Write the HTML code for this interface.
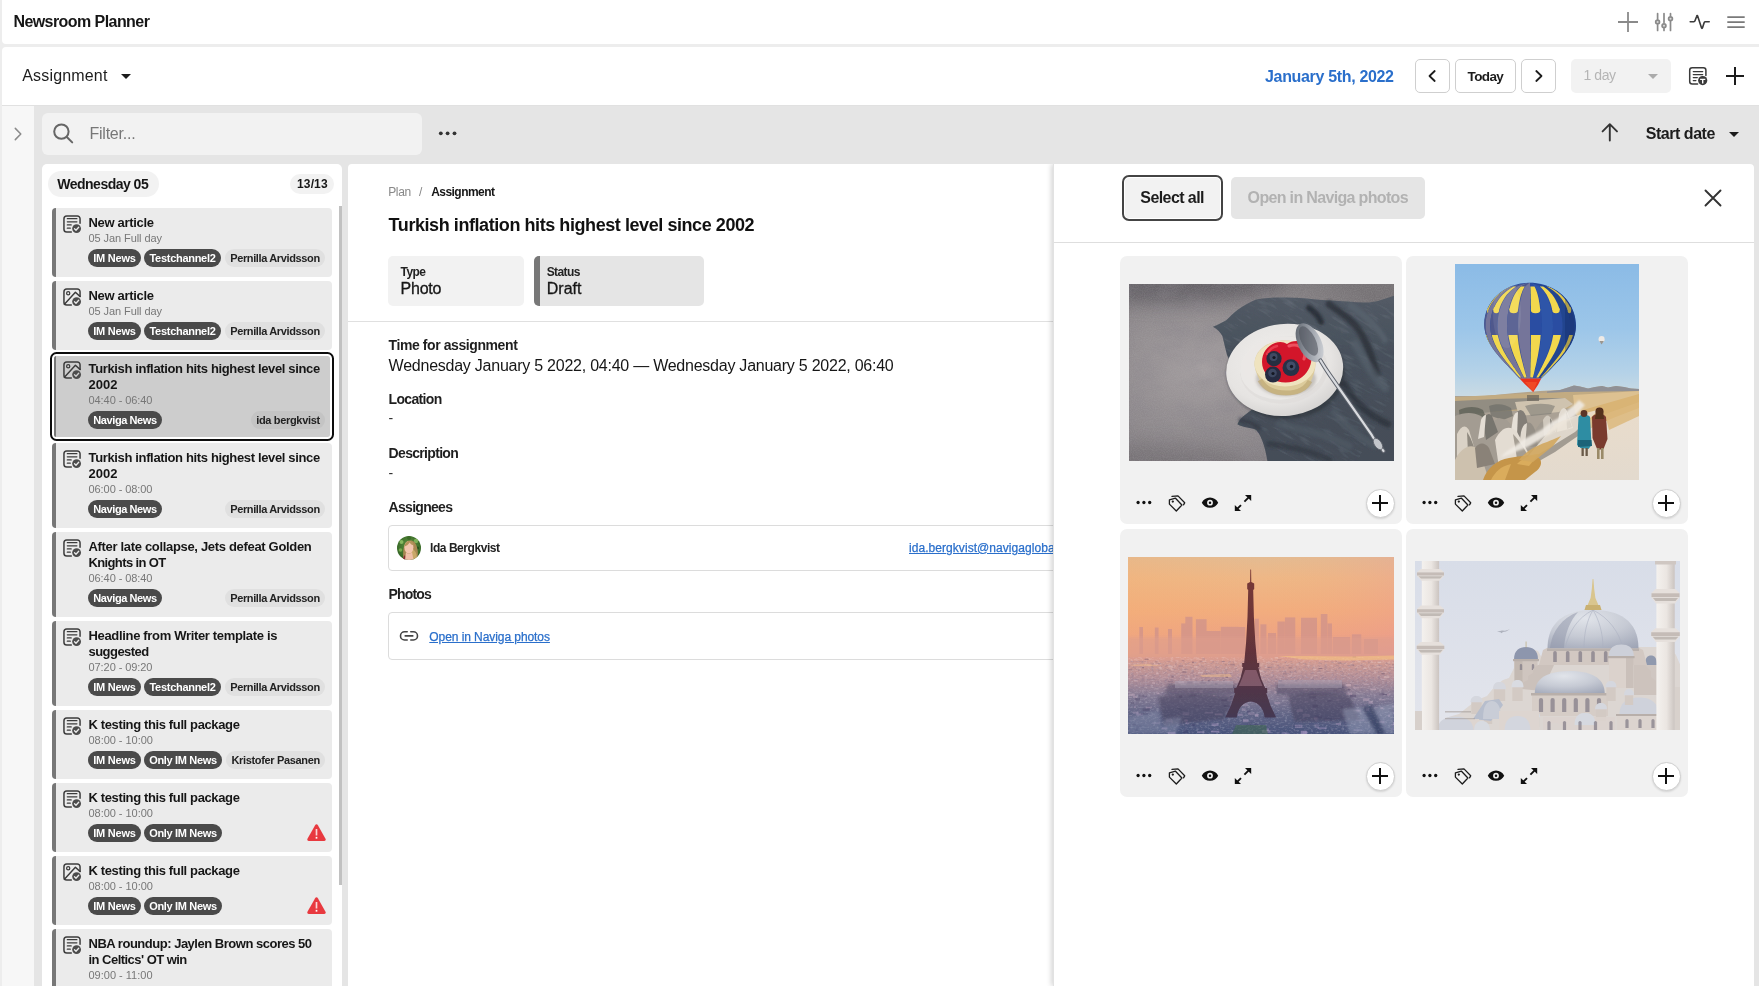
<!DOCTYPE html><html lang="en"><head><meta charset="utf-8"><title>Newsroom Planner</title><style>
*{box-sizing:border-box;margin:0;padding:0}
html,body{width:1759px;height:986px;overflow:hidden}
#wrap{position:absolute;left:0;top:0;width:1759px;height:986px;will-change:transform}
body{background:#e5e5e5;font-family:"Liberation Sans",sans-serif;color:#1a1a1a;position:relative}
.abs{position:absolute}
.t{position:absolute;white-space:nowrap;line-height:1}
.b{font-weight:bold}
svg{position:absolute;overflow:visible}
#top{position:absolute;left:2px;top:0;width:1757px;height:44px;background:#fff;border-bottom-left-radius:4px}
#gap{position:absolute;left:0;top:0;width:1759px;height:105px;background:#ededed}
#bar2{position:absolute;left:2px;top:47px;width:1757px;height:58px;background:#fff;border-top-left-radius:4px}
#side{position:absolute;left:2px;top:105px;width:32px;height:881px;background:#f7f7f7}
#lstrip{position:absolute;left:0;top:105px;width:2px;height:881px;background:#ededed}
.btn{position:absolute;top:59px;height:34px;border:1px solid #cfcfcf;border-radius:5px;background:#fff}
#filter{position:absolute;left:42px;top:113px;width:380px;height:42px;border-radius:6px;background:#f2f2f2}
#col{position:absolute;left:42px;top:164px;width:300px;height:822px;background:#fff;border-radius:5px 5px 0 0;overflow:hidden}
#scroll{position:absolute;left:339px;top:206px;width:3px;height:679px;background:#c1c1c1}
#scrolltrack{display:none}
.pill{position:absolute;height:18px;border-radius:9px;background:#4a4a4a}
.pill.l{background:#e0e0e0}
.card{position:absolute;left:52px;width:280px;background:#ebebeb;border-radius:4px;overflow:hidden}
.card .bar{position:absolute;left:0;top:0;bottom:0;width:4px;background:#777}
.ct{font-size:13px;font-weight:bold;color:#161616}
.cs{font-size:11px;color:#777}
.pt{font-size:11px;font-weight:bold;color:#fff}
.pt.d{color:#222}
#detail{position:absolute;left:348px;top:164px;width:720px;height:822px;background:#fff;border-radius:4px 0 0 0;overflow:hidden}
.lab{font-size:14px;font-weight:bold;color:#1f1f1f}
.box{position:absolute;border:1px solid #dcdcdc;border-radius:4px;background:#fff}
a{color:#2a6fcb;text-decoration:underline}
#right{position:absolute;left:1054px;top:164px;width:700px;height:822px;background:#fff;border-radius:0 4px 0 0;box-shadow:-1px 0 0 #e2e2e2,-3px 0 5px rgba(0,0,0,.16);clip-path:inset(0 0 0 -12px)}
.pc{position:absolute;width:282px;height:268px;background:#f1f1f1;border-radius:7px}
.plus{position:absolute;width:29px;height:29px;border-radius:50%;background:#fff;border:1px solid #cfcfcf;box-shadow:0 1px 2px rgba(0,0,0,.12)}
</style></head><body><div id="wrap">
<div id="gap"></div><div id="top"></div><div id="bar2"></div><div id="lstrip"></div><div id="side"></div><div class="abs" style="left:2px;top:105px;width:1757px;height:1px;background:#e1e1e1"></div>
<span id="t_title" class="t b" style="left:13.4px;top:13.65px;font-size:16px;letter-spacing:-0.562px;color:#161616">Newsroom Planner</span>
<svg style="left:1616px;top:10px" width="24" height="24" viewBox="0 0 24 24" fill="none" stroke="#8a8a8a" stroke-width="1.8"><path d="M12 2v20M2 12h20"/></svg>
<svg style="left:1652px;top:10px" width="24" height="24" viewBox="0 0 24 24" fill="none" stroke="#8a8a8a" stroke-width="1.7" stroke-linecap="round"><path d="M5.6 3.6v5.6M5.6 14.8v5.6M12 3.6v9M12 18.6v1.8M18.5 3.6v2.4M18.5 11.4v9"/><circle cx="5.6" cy="12" r="1.9" fill="#d9d9d9"/><circle cx="12" cy="15.8" r="1.9" fill="#d9d9d9"/><circle cx="18.5" cy="8.7" r="1.9" fill="#d9d9d9"/></svg>
<svg style="left:1688px;top:10px" width="24" height="24" viewBox="0 0 24 24" fill="none" stroke="#3a3a3a" stroke-width="1.6" stroke-linecap="round" stroke-linejoin="round"><path d="M2.2 11.7h3.6c.6 0 1-.3 1.2-.9L8.600 6.400c.3-1 .9-1 1.200 0l3.600 11.200c.3 1 .9 1 1.200 0l1.600-5c.2-.6.6-.9 1.200-.9h3.800"/></svg>
<svg style="left:1724px;top:10px" width="24" height="24" viewBox="0 0 24 24" fill="none" stroke="#7a7a7a" stroke-width="1.7"><path d="M3.300 7.200h17.400M3.300 12.100h17.400M3.300 17.100h17.400"/></svg>
<span id="t_assign" class="t " style="left:22.2px;top:67.65px;font-size:16px;letter-spacing:0.178px;color:#1c1c1c">Assignment</span>
<svg style="left:121px;top:74px" width="10" height="5" viewBox="0 0 10 5"><path d="M0 0h10L5 5z" fill="#1c1c1c"/></svg>
<span id="t_date" class="t b" style="left:1265px;top:68.65px;font-size:16px;letter-spacing:-0.331px;color:#2a6fcb">January 5th, 2022</span>
<div class="btn" style="left:1415px;width:35px"></div><div class="btn" style="left:1455px;width:61px"></div><div class="btn" style="left:1521px;width:35px"></div>
<svg style="left:1424px;top:68px" width="16" height="16" viewBox="0 0 16 16" fill="none" stroke="#1c1c1c" stroke-width="1.8" stroke-linecap="round" stroke-linejoin="round"><path d="M10.700 3L5.500 8l5.200 5"/></svg>
<svg style="left:1531px;top:68px" width="16" height="16" viewBox="0 0 16 16" fill="none" stroke="#1c1c1c" stroke-width="1.8" stroke-linecap="round" stroke-linejoin="round"><path d="M5.300 3L10.500 8l-5.200 5"/></svg>
<span id="t_today" class="t b" style="left:1467.6px;top:69.90px;font-size:13.5px;letter-spacing:-0.616px;color:#1c1c1c">Today</span>
<div class="abs" style="left:1571px;top:59px;width:100px;height:34px;border-radius:5px;background:#f2f2f2"></div>
<span id="t_1day" class="t " style="left:1583.5px;top:68.15px;font-size:14px;letter-spacing:-0.438px;color:#b5b5b5">1 day</span>
<svg style="left:1648px;top:74px" width="10" height="5" viewBox="0 0 10 5"><path d="M0 0h10L5 5z" fill="#ababab"/></svg>
<svg style="left:1688px;top:66px" width="20" height="20" viewBox="0 0 20 20" fill="none" stroke="#3a3a3a" stroke-width="1.5" stroke-linecap="round"><path d="M9.600 17.900H4.200c-1.500 0-2.500-1-2.500-2.500V4.200c0-1.500 1-2.500 2.500-2.500h11.200c1.500 0 2.500 1 2.500 2.500v5.200"/><path d="M5.300 5.600h9.400M5.300 8.600h9.400M5.300 11.600h4M5.300 14.600h2.600" stroke-width="1.300"/><circle cx="14.700" cy="14.600" r="4.600" fill="#3a3a3a" stroke="none"/><path d="M12.100 12.700h5.200v1.400h-1.900v3.300H14v-3.300h-1.900z" fill="#fff" stroke="none"/></svg>
<svg style="left:1726px;top:67px" width="18" height="18" viewBox="0 0 18 18" fill="none" stroke="#1c1c1c" stroke-width="2"><path d="M9 0v18M0 9h18"/></svg>
<svg style="left:10px;top:126px" width="16" height="16" viewBox="0 0 16 16" fill="none" stroke="#8a8a8a" stroke-width="1.500" stroke-linecap="round" stroke-linejoin="round"><path d="M5.300 2.400L10.800 8l-5.500 5.600"/></svg>
<div id="filter"></div>
<svg style="left:51px;top:121px" width="24" height="24" viewBox="0 0 24 24" fill="none" stroke="#666" stroke-width="2" stroke-linecap="round"><circle cx="10.400" cy="10.600" r="7.200"/><path d="M15.800 16l5.400 5.400"/></svg>
<span id="t_filter" class="t " style="left:89.4px;top:125.65px;font-size:16px;letter-spacing:-0.214px;color:#777">Filter...</span>
<svg style="left:436px;top:129px" width="24" height="8" viewBox="0 0 24 8"><circle cx="4.800" cy="4.300" r="1.900" fill="#333"/><circle cx="11.600" cy="4.300" r="1.900" fill="#333"/><circle cx="18.500" cy="4.300" r="1.900" fill="#333"/></svg>
<svg style="left:1600px;top:122px" width="20" height="20" viewBox="0 0 20 20" fill="none" stroke="#333" stroke-width="1.900" stroke-linecap="round" stroke-linejoin="round"><path d="M9.800 18.600V2.200M2.600 9.400L9.800 2.200l7.200 7.200"/></svg>
<span id="t_start" class="t b" style="left:1645.7px;top:125.65px;font-size:16px;letter-spacing:-0.455px;color:#1c1c1c">Start date</span>
<svg style="left:1729px;top:132px" width="10" height="5" viewBox="0 0 10 5"><path d="M0 0h10L5 5z" fill="#1c1c1c"/></svg>
<div id="col"></div><div id="scrolltrack"></div><div id="scroll"></div>
<div class="abs" style="left:48px;top:171px;width:111px;height:26px;border-radius:13px;background:#f2f2f2"></div>
<span id="t_wed" class="t b" style="left:57.3px;top:177.15px;font-size:14px;letter-spacing:-0.511px;color:#161616">Wednesday 05</span>
<div class="abs" style="left:290px;top:174px;width:44px;height:20px;border-radius:10px;background:#f2f2f2"></div>
<span id="t_1313" class="t b" style="left:297px;top:178.15px;font-size:12px;letter-spacing:0.142px;color:#161616">13/13</span>
<div class="card" style="top:208px;height:69px">
<div class="bar"></div>
<svg style="left:10px;top:6px" width="20" height="20" viewBox="0 0 20 20" fill="none" stroke="#3c3c3c" stroke-width="1.500" stroke-linecap="round"><path d="M9.300 18.050H4.700a2.750 2.750 0 0 1-2.750-2.750V4.700A2.750 2.750 0 0 1 4.700 1.950h10.600a2.750 2.750 0 0 1 2.750 2.750v4.600"/><path d="M5.300 4.700h9.600M5.300 7.800h9.600M5.300 10.900h3.900M5.300 14.200h3" stroke-width="1.250"/><circle cx="14.600" cy="14.600" r="4.400" fill="#4c4c4c" stroke="none"/><path d="M12.500 14.700l1.500 1.500 2.700-3" stroke="#ebebeb" stroke-width="1.300" stroke-linejoin="round"/></svg>
<span id="c0_l0" class="t ct" style="left:36.5px;top:8.15px;letter-spacing:-0.316px;">New article</span>
<span id="c0_s" class="t cs" style="left:36.5px;top:24.65px;letter-spacing:-0.079px;">05 Jan Full day</span>
<div class="pill" style="left:36px;top:41px;width:52.8px"></div><span class="t pt" style="left:36px;width:52.8px;top:44.65px;text-align:center;letter-spacing:-0.236px;">IM News</span>
<div class="pill" style="left:92px;top:41px;width:77px"></div><span class="t pt" style="left:92px;width:77px;top:44.65px;text-align:center;letter-spacing:-0.291px;">Testchannel2</span>
<div class="pill l" style="left:173px;top:41px;width:100px"></div><span class="t pt d" style="left:173px;width:100px;top:44.65px;text-align:center;letter-spacing:-0.364px;">Pernilla Arvidsson</span>
</div>
<div class="card" style="top:281px;height:69px">
<div class="bar"></div>
<svg style="left:10px;top:6px" width="20" height="20" viewBox="0 0 20 20" fill="none" stroke="#3c3c3c" stroke-width="1.500" stroke-linecap="round" stroke-linejoin="round"><path d="M9.300 18.050H4.700a2.750 2.750 0 0 1-2.750-2.750V4.700A2.750 2.750 0 0 1 4.700 1.950h10.600a2.750 2.750 0 0 1 2.750 2.750v4.600"/><circle cx="6.200" cy="6.300" r="1.600" stroke-width="1.250"/><path d="M2.400 17.200L13.400 5.300l4.800 4.300" stroke-width="1.450"/><circle cx="14.600" cy="14.600" r="4.400" fill="#4c4c4c" stroke="none"/><path d="M12.500 14.700l1.500 1.500 2.700-3" stroke="#ebebeb" stroke-width="1.300"/></svg>
<span id="c1_l0" class="t ct" style="left:36.5px;top:8.15px;letter-spacing:-0.316px;">New article</span>
<span id="c1_s" class="t cs" style="left:36.5px;top:24.65px;letter-spacing:-0.079px;">05 Jan Full day</span>
<div class="pill" style="left:36px;top:41px;width:52.8px"></div><span class="t pt" style="left:36px;width:52.8px;top:44.65px;text-align:center;letter-spacing:-0.236px;">IM News</span>
<div class="pill" style="left:92px;top:41px;width:77px"></div><span class="t pt" style="left:92px;width:77px;top:44.65px;text-align:center;letter-spacing:-0.291px;">Testchannel2</span>
<div class="pill l" style="left:173px;top:41px;width:100px"></div><span class="t pt d" style="left:173px;width:100px;top:44.65px;text-align:center;letter-spacing:-0.364px;">Pernilla Arvidsson</span>
</div>
<div class="abs" style="left:50px;top:352px;width:284px;height:89px;border:2px solid #0d0d0d;border-radius:6.500px;background:#fff"></div>
<div class="card" style="top:356px;height:81px;left:54px;width:276px;background:#cdcdcd;border-radius:2.500px">
<div class="bar" style="width:2px"></div>
<svg style="left:8px;top:4px" width="20" height="20" viewBox="0 0 20 20" fill="none" stroke="#3c3c3c" stroke-width="1.500" stroke-linecap="round" stroke-linejoin="round"><path d="M9.300 18.050H4.700a2.750 2.750 0 0 1-2.750-2.750V4.700A2.750 2.750 0 0 1 4.700 1.950h10.600a2.750 2.750 0 0 1 2.750 2.750v4.600"/><circle cx="6.200" cy="6.300" r="1.600" stroke-width="1.250"/><path d="M2.400 17.200L13.400 5.300l4.800 4.300" stroke-width="1.450"/><circle cx="14.600" cy="14.600" r="4.400" fill="#4c4c4c" stroke="none"/><path d="M12.500 14.700l1.500 1.500 2.700-3" stroke="#cdcdcd" stroke-width="1.300"/></svg>
<span id="c2_l0" class="t ct" style="left:34.5px;top:6.15px;letter-spacing:-0.351px;">Turkish inflation hits highest level since</span>
<span id="c2_l1" class="t ct" style="left:34.5px;top:22.15px;letter-spacing:0.026px;">2002</span>
<span id="c2_s" class="t cs" style="left:34.5px;top:38.65px;letter-spacing:-0.070px;">04:40 - 06:40</span>
<div class="pill" style="left:34px;top:55px;width:74px"></div><span class="t pt" style="left:34px;width:74px;top:58.65px;text-align:center;letter-spacing:-0.408px;">Naviga News</span>
<div class="pill l" style="background:#c4c4c4;left:197px;top:55px;width:74px"></div><span class="t pt d" style="left:197px;width:74px;top:58.65px;text-align:center;letter-spacing:-0.338px;">ida bergkvist</span>
</div>
<div class="card" style="top:443px;height:85px">
<div class="bar"></div>
<svg style="left:10px;top:6px" width="20" height="20" viewBox="0 0 20 20" fill="none" stroke="#3c3c3c" stroke-width="1.500" stroke-linecap="round"><path d="M9.300 18.050H4.700a2.750 2.750 0 0 1-2.750-2.750V4.700A2.750 2.750 0 0 1 4.700 1.950h10.600a2.750 2.750 0 0 1 2.750 2.750v4.600"/><path d="M5.300 4.700h9.600M5.300 7.800h9.600M5.300 10.900h3.900M5.300 14.200h3" stroke-width="1.250"/><circle cx="14.600" cy="14.600" r="4.400" fill="#4c4c4c" stroke="none"/><path d="M12.500 14.700l1.500 1.500 2.700-3" stroke="#ebebeb" stroke-width="1.300" stroke-linejoin="round"/></svg>
<span id="c3_l0" class="t ct" style="left:36.5px;top:8.15px;letter-spacing:-0.351px;">Turkish inflation hits highest level since</span>
<span id="c3_l1" class="t ct" style="left:36.5px;top:24.15px;letter-spacing:0.026px;">2002</span>
<span id="c3_s" class="t cs" style="left:36.5px;top:40.65px;letter-spacing:-0.070px;">06:00 - 08:00</span>
<div class="pill" style="left:36px;top:57px;width:74px"></div><span class="t pt" style="left:36px;width:74px;top:60.65px;text-align:center;letter-spacing:-0.408px;">Naviga News</span>
<div class="pill l" style="left:173px;top:57px;width:100px"></div><span class="t pt d" style="left:173px;width:100px;top:60.65px;text-align:center;letter-spacing:-0.364px;">Pernilla Arvidsson</span>
</div>
<div class="card" style="top:532px;height:85px">
<div class="bar"></div>
<svg style="left:10px;top:6px" width="20" height="20" viewBox="0 0 20 20" fill="none" stroke="#3c3c3c" stroke-width="1.500" stroke-linecap="round"><path d="M9.300 18.050H4.700a2.750 2.750 0 0 1-2.750-2.750V4.700A2.750 2.750 0 0 1 4.700 1.950h10.600a2.750 2.750 0 0 1 2.750 2.750v4.600"/><path d="M5.300 4.700h9.600M5.300 7.800h9.600M5.300 10.900h3.900M5.300 14.200h3" stroke-width="1.250"/><circle cx="14.600" cy="14.600" r="4.400" fill="#4c4c4c" stroke="none"/><path d="M12.500 14.700l1.500 1.500 2.700-3" stroke="#ebebeb" stroke-width="1.300" stroke-linejoin="round"/></svg>
<span id="c4_l0" class="t ct" style="left:36.5px;top:8.15px;letter-spacing:-0.322px;">After late collapse, Jets defeat Golden</span>
<span id="c4_l1" class="t ct" style="left:36.5px;top:24.15px;letter-spacing:-0.627px;">Knights in OT</span>
<span id="c4_s" class="t cs" style="left:36.5px;top:40.65px;letter-spacing:-0.070px;">06:40 - 08:40</span>
<div class="pill" style="left:36px;top:57px;width:74px"></div><span class="t pt" style="left:36px;width:74px;top:60.65px;text-align:center;letter-spacing:-0.408px;">Naviga News</span>
<div class="pill l" style="left:173px;top:57px;width:100px"></div><span class="t pt d" style="left:173px;width:100px;top:60.65px;text-align:center;letter-spacing:-0.364px;">Pernilla Arvidsson</span>
</div>
<div class="card" style="top:621px;height:85px">
<div class="bar"></div>
<svg style="left:10px;top:6px" width="20" height="20" viewBox="0 0 20 20" fill="none" stroke="#3c3c3c" stroke-width="1.500" stroke-linecap="round"><path d="M9.300 18.050H4.700a2.750 2.750 0 0 1-2.750-2.750V4.700A2.750 2.750 0 0 1 4.700 1.950h10.600a2.750 2.750 0 0 1 2.750 2.750v4.600"/><path d="M5.300 4.700h9.600M5.300 7.800h9.600M5.300 10.900h3.900M5.300 14.200h3" stroke-width="1.250"/><circle cx="14.600" cy="14.600" r="4.400" fill="#4c4c4c" stroke="none"/><path d="M12.500 14.700l1.500 1.500 2.700-3" stroke="#ebebeb" stroke-width="1.300" stroke-linejoin="round"/></svg>
<span id="c5_l0" class="t ct" style="left:36.5px;top:8.15px;letter-spacing:-0.328px;">Headline from Writer template is</span>
<span id="c5_l1" class="t ct" style="left:36.5px;top:24.15px;letter-spacing:-0.539px;">suggested</span>
<span id="c5_s" class="t cs" style="left:36.5px;top:40.65px;letter-spacing:-0.070px;">07:20 - 09:20</span>
<div class="pill" style="left:36px;top:57px;width:52.8px"></div><span class="t pt" style="left:36px;width:52.8px;top:60.65px;text-align:center;letter-spacing:-0.236px;">IM News</span>
<div class="pill" style="left:92px;top:57px;width:77px"></div><span class="t pt" style="left:92px;width:77px;top:60.65px;text-align:center;letter-spacing:-0.291px;">Testchannel2</span>
<div class="pill l" style="left:173px;top:57px;width:100px"></div><span class="t pt d" style="left:173px;width:100px;top:60.65px;text-align:center;letter-spacing:-0.364px;">Pernilla Arvidsson</span>
</div>
<div class="card" style="top:710px;height:69px">
<div class="bar"></div>
<svg style="left:10px;top:6px" width="20" height="20" viewBox="0 0 20 20" fill="none" stroke="#3c3c3c" stroke-width="1.500" stroke-linecap="round"><path d="M9.300 18.050H4.700a2.750 2.750 0 0 1-2.750-2.750V4.700A2.750 2.750 0 0 1 4.700 1.950h10.600a2.750 2.750 0 0 1 2.750 2.750v4.600"/><path d="M5.300 4.700h9.600M5.300 7.800h9.600M5.300 10.900h3.900M5.300 14.200h3" stroke-width="1.250"/><circle cx="14.600" cy="14.600" r="4.400" fill="#4c4c4c" stroke="none"/><path d="M12.500 14.700l1.500 1.500 2.700-3" stroke="#ebebeb" stroke-width="1.300" stroke-linejoin="round"/></svg>
<span id="c6_l0" class="t ct" style="left:36.5px;top:8.15px;letter-spacing:-0.373px;">K testing this full package</span>
<span id="c6_s" class="t cs" style="left:36.5px;top:24.65px;letter-spacing:-0.037px;">08:00 - 10:00</span>
<div class="pill" style="left:36px;top:41px;width:52.8px"></div><span class="t pt" style="left:36px;width:52.8px;top:44.65px;text-align:center;letter-spacing:-0.236px;">IM News</span>
<div class="pill" style="left:92px;top:41px;width:78px"></div><span class="t pt" style="left:92px;width:78px;top:44.65px;text-align:center;letter-spacing:-0.330px;">Only IM News</span>
<div class="pill l" style="left:174.3px;top:41px;width:98.7px"></div><span class="t pt d" style="left:174.3px;width:98.7px;top:44.65px;text-align:center;letter-spacing:-0.335px;">Kristofer Pasanen</span>
</div>
<div class="card" style="top:783px;height:69px">
<div class="bar"></div>
<svg style="left:10px;top:6px" width="20" height="20" viewBox="0 0 20 20" fill="none" stroke="#3c3c3c" stroke-width="1.500" stroke-linecap="round"><path d="M9.300 18.050H4.700a2.750 2.750 0 0 1-2.750-2.750V4.700A2.750 2.750 0 0 1 4.700 1.950h10.600a2.750 2.750 0 0 1 2.750 2.750v4.600"/><path d="M5.300 4.700h9.600M5.300 7.800h9.600M5.300 10.900h3.900M5.300 14.200h3" stroke-width="1.250"/><circle cx="14.600" cy="14.600" r="4.400" fill="#4c4c4c" stroke="none"/><path d="M12.500 14.700l1.500 1.500 2.700-3" stroke="#ebebeb" stroke-width="1.300" stroke-linejoin="round"/></svg>
<span id="c7_l0" class="t ct" style="left:36.5px;top:8.15px;letter-spacing:-0.373px;">K testing this full package</span>
<span id="c7_s" class="t cs" style="left:36.5px;top:24.65px;letter-spacing:-0.037px;">08:00 - 10:00</span>
<div class="pill" style="left:36px;top:41px;width:52.8px"></div><span class="t pt" style="left:36px;width:52.8px;top:44.65px;text-align:center;letter-spacing:-0.236px;">IM News</span>
<div class="pill" style="left:92px;top:41px;width:78px"></div><span class="t pt" style="left:92px;width:78px;top:44.65px;text-align:center;letter-spacing:-0.330px;">Only IM News</span>
<svg style="left:253.500px;top:40.2px" width="21" height="18.900" viewBox="0 0 20 18"><path d="M10 1.300c.6 0 1 .3 1.300.8l7.300 12.800c.6 1.100-.1 2.200-1.300 2.200H2.700c-1.200 0-1.900-1.100-1.300-2.200L8.700 2.100c.3-.5.700-.8 1.300-.8z" fill="#e8393f"/><path d="M9.200 5.600h1.600v6.400H9.200z" fill="#fbd5d6"/><rect x="9.200" y="13.200" width="1.600" height="1.700" fill="#fff"/></svg>
</div>
<div class="card" style="top:856px;height:69px">
<div class="bar"></div>
<svg style="left:10px;top:6px" width="20" height="20" viewBox="0 0 20 20" fill="none" stroke="#3c3c3c" stroke-width="1.500" stroke-linecap="round" stroke-linejoin="round"><path d="M9.300 18.050H4.700a2.750 2.750 0 0 1-2.750-2.750V4.700A2.750 2.750 0 0 1 4.700 1.950h10.600a2.750 2.750 0 0 1 2.750 2.750v4.600"/><circle cx="6.200" cy="6.300" r="1.600" stroke-width="1.250"/><path d="M2.400 17.200L13.400 5.300l4.800 4.300" stroke-width="1.450"/><circle cx="14.600" cy="14.600" r="4.400" fill="#4c4c4c" stroke="none"/><path d="M12.500 14.700l1.500 1.500 2.700-3" stroke="#ebebeb" stroke-width="1.300"/></svg>
<span id="c8_l0" class="t ct" style="left:36.5px;top:8.15px;letter-spacing:-0.373px;">K testing this full package</span>
<span id="c8_s" class="t cs" style="left:36.5px;top:24.65px;letter-spacing:-0.037px;">08:00 - 10:00</span>
<div class="pill" style="left:36px;top:41px;width:52.8px"></div><span class="t pt" style="left:36px;width:52.8px;top:44.65px;text-align:center;letter-spacing:-0.236px;">IM News</span>
<div class="pill" style="left:92px;top:41px;width:78px"></div><span class="t pt" style="left:92px;width:78px;top:44.65px;text-align:center;letter-spacing:-0.330px;">Only IM News</span>
<svg style="left:253.500px;top:40.2px" width="21" height="18.900" viewBox="0 0 20 18"><path d="M10 1.300c.6 0 1 .3 1.300.8l7.300 12.800c.6 1.100-.1 2.200-1.300 2.200H2.700c-1.200 0-1.900-1.100-1.300-2.200L8.700 2.100c.3-.5.700-.8 1.300-.8z" fill="#e8393f"/><path d="M9.200 5.600h1.600v6.400H9.200z" fill="#fbd5d6"/><rect x="9.200" y="13.200" width="1.600" height="1.700" fill="#fff"/></svg>
</div>
<div class="card" style="top:929px;height:85px">
<div class="bar"></div>
<svg style="left:10px;top:6px" width="20" height="20" viewBox="0 0 20 20" fill="none" stroke="#3c3c3c" stroke-width="1.500" stroke-linecap="round"><path d="M9.300 18.050H4.700a2.750 2.750 0 0 1-2.750-2.750V4.700A2.750 2.750 0 0 1 4.700 1.950h10.600a2.750 2.750 0 0 1 2.750 2.750v4.600"/><path d="M5.300 4.700h9.600M5.300 7.800h9.600M5.300 10.900h3.900M5.300 14.200h3" stroke-width="1.250"/><circle cx="14.600" cy="14.600" r="4.400" fill="#4c4c4c" stroke="none"/><path d="M12.500 14.700l1.500 1.500 2.700-3" stroke="#ebebeb" stroke-width="1.300" stroke-linejoin="round"/></svg>
<span id="c9_l0" class="t ct" style="left:36.5px;top:8.15px;letter-spacing:-0.485px;">NBA roundup: Jaylen Brown scores 50</span>
<span id="c9_l1" class="t ct" style="left:36.5px;top:24.15px;letter-spacing:-0.531px;">in Celtics' OT win</span>
<span id="c9_s" class="t cs" style="left:36.5px;top:40.65px;letter-spacing:-0.001px;">09:00 - 11:00</span>
</div>
<div id="detail"></div>
<span id="d_plan" class="t " style="left:388.2px;top:186.15px;font-size:12px;letter-spacing:-0.344px;color:#888">Plan</span>
<span id="d_slash" class="t " style="left:419px;top:186.15px;font-size:12px;color:#888">/</span>
<span id="d_assign" class="t b" style="left:431.2px;top:186.15px;font-size:12px;letter-spacing:-0.543px;color:#161616">Assignment</span>
<span id="d_title" class="t b" style="left:388.6px;top:216.15px;font-size:18px;letter-spacing:-0.430px;color:#111">Turkish inflation hits highest level since 2002</span>
<div class="abs" style="left:388px;top:256px;width:136px;height:50px;border-radius:5px;background:#f2f2f2"></div>
<div class="abs" style="left:534px;top:256px;width:170px;height:50px;border-radius:5px;background:#e5e5e5;overflow:hidden"><div class="abs" style="left:0;top:0;width:6px;height:50px;background:#787878"></div></div>
<span id="d_type" class="t b" style="left:400.5px;top:266.15px;font-size:12px;letter-spacing:-0.542px;color:#222">Type</span>
<span id="d_photo" class="t " style="left:400.5px;top:280.65px;font-size:16px;letter-spacing:-0.203px;color:#161616;-webkit-text-stroke:.3px #161616">Photo</span>
<span id="d_status" class="t b" style="left:546.7px;top:266.15px;font-size:12px;letter-spacing:-0.597px;color:#222">Status</span>
<span id="d_draft" class="t " style="left:546.7px;top:280.65px;font-size:16px;letter-spacing:0.032px;color:#161616;-webkit-text-stroke:.3px #161616">Draft</span>
<div class="abs" style="left:348px;top:321px;width:720px;height:1px;background:#e0e0e0"></div>
<span id="d_l1" class="t lab" style="left:388.6px;top:338.15px;font-size:14px;letter-spacing:-0.415px;">Time for assignment</span>
<span id="d_val" class="t " style="left:388.6px;top:357.65px;font-size:16px;letter-spacing:-0.242px;color:#161616">Wednesday January 5 2022, 04:40 — Wednesday January 5 2022, 06:40</span>
<span id="d_l2" class="t lab" style="left:388.6px;top:392.15px;font-size:14px;letter-spacing:-0.678px;">Location</span>
<span id="d_h1" class="t " style="left:388.6px;top:411.15px;font-size:14px;color:#333">-</span>
<span id="d_l3" class="t lab" style="left:388.6px;top:446.15px;font-size:14px;letter-spacing:-0.682px;">Description</span>
<span id="d_h2" class="t " style="left:388.6px;top:466.15px;font-size:14px;color:#333">-</span>
<span id="d_l4" class="t lab" style="left:388.6px;top:500.15px;font-size:14px;letter-spacing:-0.706px;">Assignees</span>
<div class="box" style="left:388px;top:525px;width:720px;height:46px"></div>
<svg style="left:397px;top:536px" width="24" height="24" viewBox="0 0 24 24"><defs><clipPath id="avc"><circle cx="12" cy="12" r="12"/></clipPath><radialGradient id="avg" cx="50%" cy="40%" r="65%"><stop offset="0" stop-color="#5f9340"/><stop offset="1" stop-color="#2f5f22"/></radialGradient><filter id="avb" x="-20%" y="-20%" width="140%" height="140%"><feGaussianBlur stdDeviation=".7"/></filter></defs><g clip-path="url(#avc)"><rect width="24" height="24" fill="url(#avg)"/><g filter="url(#avb)"><circle cx="4.500" cy="6" r="2" fill="#86b860"/><circle cx="19" cy="5" r="2.200" fill="#7db058"/><circle cx="3.500" cy="14" r="1.800" fill="#78aa50"/><circle cx="20.500" cy="12" r="1.600" fill="#24501c"/><circle cx="12" cy="2" r="2" fill="#3a6a28"/><path d="M6.500 24c-.8-6-.5-13 2-17 1.800-2.800 6.500-3.300 9-.8 2.500 2.600 3 6.500 3.300 10 .2 3-.3 5.500-1.300 7.800z" fill="#a88852"/><path d="M14.500 12c2 1 4 3.500 5 6.500.5 2 .2 4-.5 5.500h-6z" fill="#c9a868"/><path d="M6 24c0-2 .5-4 2-5l2 5z" fill="#8a2f33"/><ellipse cx="11.900" cy="11.300" rx="4.500" ry="6.300" fill="#f2c5ae"/><path d="M9 16c1 2 4.500 2.200 6 0l1.500 8h-8.500z" fill="#efbfa8"/><path d="M7.600 10.500c.3-3.500 2.300-5.800 5.200-5.500 2.300.3 3.800 2.200 4 4.500-1.800-.5-3.300-1.500-4.200-3-1 2-2.800 3.300-5 4z" fill="#b3935a"/></g></g></svg>
<span id="d_ida" class="t b" style="left:430px;top:542.15px;font-size:12px;letter-spacing:-0.448px;color:#222">Ida Bergkvist</span>
<a id="d_mail" class="t" style="left:909px;top:541.65px;font-size:12px;-webkit-text-stroke:.25px #2a6fcb;letter-spacing:0.055px;">ida.bergkvist@navigaglobal.com</a>
<span id="d_l5" class="t lab" style="left:388.6px;top:587.15px;font-size:14px;letter-spacing:-0.851px;">Photos</span>
<div class="box" style="left:388px;top:612px;width:720px;height:48px"></div>
<svg style="left:399px;top:630px" width="20" height="12" viewBox="0 0 20 12" fill="none" stroke="#444" stroke-width="1.600" stroke-linecap="round"><path d="M8.200 1.800H5.600a4.100 4.100 0 0 0 0 8.200h2.600M11.800 1.800h2.600a4.100 4.100 0 0 1 0 8.200h-2.600M6.200 5.900h7.600"/></svg>
<a id="d_link" class="t" style="left:429.3px;top:630.65px;font-size:12px;-webkit-text-stroke:.25px #2a6fcb;letter-spacing:-0.070px;">Open in Naviga photos</a>
<div id="right"></div>
<div class="abs" style="left:1122px;top:175px;width:101px;height:46px;border:2px solid #444;border-radius:7px;background:#f2f2f2;box-shadow:inset 0 0 0 1px #fff"></div>
<span id="r_sel" class="t b" style="left:1140.3px;top:189.65px;font-size:16px;letter-spacing:-0.575px;color:#1c1c1c">Select all</span>
<div class="abs" style="left:1231px;top:177px;width:194px;height:42px;border-radius:5px;background:#e5e5e5"></div>
<span id="r_open" class="t b" style="left:1247.6px;top:189.65px;font-size:16px;letter-spacing:-0.662px;color:#b2b2b2">Open in Naviga photos</span>
<svg style="left:1703px;top:188px" width="20" height="20" viewBox="0 0 20 20" fill="none" stroke="#333" stroke-width="1.900" stroke-linecap="round"><path d="M2.500 2.500l15 15M17.500 2.500l-15 15"/></svg>
<div class="abs" style="left:1054px;top:242px;width:700px;height:1px;background:#dedede"></div>
<div class="pc" style="left:1120px;top:256px">
<svg style="left:9px;top:28px;overflow:hidden" width="265" height="177" viewBox="0 0 265 177"><defs>
<radialGradient id="p1bg" cx="28%" cy="48%" r="75%"><stop offset="0" stop-color="#a39d9f"/><stop offset=".55" stop-color="#8d888b"/><stop offset="1" stop-color="#767275"/></radialGradient>
<linearGradient id="p1cl" x1="0" y1="0" x2="0" y2="1"><stop offset="0" stop-color="#535b66"/><stop offset=".35" stop-color="#47505b"/><stop offset="1" stop-color="#454d58"/></linearGradient>
<radialGradient id="p1pl" cx="45%" cy="40%" r="65%"><stop offset="0" stop-color="#f1efed"/><stop offset=".7" stop-color="#e6e4e2"/><stop offset="1" stop-color="#d2d0cf"/></radialGradient>
<linearGradient id="p1sp" x1="0" y1="0" x2="1" y2="1"><stop offset="0" stop-color="#4f555e"/><stop offset=".5" stop-color="#9a9fa8"/><stop offset="1" stop-color="#dfe1e4"/></linearGradient>
<filter id="p1b1" x="-20%" y="-20%" width="140%" height="140%"><feGaussianBlur stdDeviation="1.6"/></filter>
<filter id="p1b3" x="-30%" y="-60%" width="160%" height="220%"><feGaussianBlur stdDeviation="9"/></filter>
<filter id="p1m" x="0" y="0" width="100%" height="100%"><feTurbulence type="fractalNoise" baseFrequency=".035 .05" numOctaves="3" seed="11"/><feColorMatrix type="matrix" values="0 0 0 0 .25  0 0 0 0 .23  0 0 0 0 .26  0 0 0 1.600 -.62"/></filter>
<clipPath id="p1cc"><path d="M127 15.600C140 13 152 13.500 165 13.700s25 2.500 37 2.800 26 2.500 38 1.900c9-.5 17-4 25-6.600V177H138.400c-1-6-2-11-3.700-16.100-1.800-5.600-3.700-11-7.500-15-5-2.500-13-2-18.800-5.600 1.800-4 4-6.800 7.500-9.400 2.500-1.900 5-3.600 7.500-5.600L98 71c-1.700-6.300-3-12.500-4.600-18.900-2-3.800-4.700-6.500-9.500-9.300 4.200-1.600 8-4 13.300-6.600 3.500-3.500 7-7 11.200-10.300 5.700-4 12-7.500 18.600-10.300z"/></clipPath>
<filter id="p1f" x="0" y="0" width="100%" height="100%"><feTurbulence type="fractalNoise" baseFrequency=".05 .3" numOctaves="3" seed="5"/><feColorMatrix type="matrix" values="0 0 0 0 .08  0 0 0 0 .1  0 0 0 0 .13  0 0 0 2.400 -1.050"/></filter>
<filter id="p1f2" x="0" y="0" width="100%" height="100%"><feTurbulence type="fractalNoise" baseFrequency=".05 .28" numOctaves="3" seed="9"/><feColorMatrix type="matrix" values="0 0 0 0 .55  0 0 0 0 .6  0 0 0 0 .68  0 0 0 2.400 -1.250"/></filter>
<filter id="p1b2" x="-20%" y="-20%" width="140%" height="140%"><feGaussianBlur stdDeviation=".5"/></filter>
<filter id="p1n" x="0" y="0" width="100%" height="100%"><feTurbulence type="fractalNoise" baseFrequency=".9" numOctaves="2" seed="3"/><feColorMatrix type="matrix" values="0 0 0 0 .5  0 0 0 0 .5  0 0 0 0 .5  0 0 0 .9 -.28"/></filter>
</defs>
<rect width="265" height="177" fill="url(#p1bg)"/>
<ellipse cx="40" cy="-6" rx="120" ry="26" fill="#5c585f" opacity=".75" filter="url(#p1b3)"/><ellipse cx="30" cy="186" rx="90" ry="26" fill="#6f6b6f" opacity=".55" filter="url(#p1b3)"/><rect width="140" height="177" filter="url(#p1m)" opacity=".5"/>
<rect width="265" height="177" filter="url(#p1n)" opacity=".35"/>
<g filter="url(#p1b2)">
<path d="M127 15.600C140 13 152 13.500 165 13.700s25 2.500 37 2.800 26 2.500 38 1.900c9-.5 17-4 25-6.600V177H138.400c-1-6-2-11-3.700-16.100-1.800-5.600-3.700-11-7.500-15-5-2.500-13-2-18.800-5.600 1.800-4 4-6.800 7.500-9.400 2.500-1.900 5-3.600 7.500-5.600L98 71c-1.700-6.300-3-12.500-4.600-18.900-2-3.800-4.700-6.500-9.500-9.300 4.200-1.600 8-4 13.300-6.600 3.500-3.500 7-7 11.200-10.300 5.700-4 12-7.500 18.600-10.300z" fill="url(#p1cl)"/>
<g clip-path="url(#p1cc)"><rect width="265" height="177" filter="url(#p1f)" opacity=".22" transform="rotate(28 190 90)"/><rect width="265" height="177" filter="url(#p1f2)" opacity=".16" transform="rotate(28 190 90)"/></g>
<g fill="none" stroke-linecap="round" filter="url(#p1b1)">
<path d="M200 20c10 8 22 14 30 26s14 30 18 44" stroke="#2a2f37" stroke-width="7" opacity=".8"/>
<path d="M222 22c12 8 26 20 34 34" stroke="#5a6470" stroke-width="6" opacity=".7"/>
<path d="M226 60c8 14 16 30 30 44" stroke="#58626e" stroke-width="8" opacity=".6"/>
<path d="M180 24c6 4 10 8 12 14" stroke="#23272e" stroke-width="6" opacity=".8"/>
<path d="M215 100c8 14 20 30 44 40" stroke="#2b3038" stroke-width="7" opacity=".7"/>
<path d="M150 140c20 6 44 8 70 22" stroke="#525c68" stroke-width="7" opacity=".55"/>
<path d="M140 160c20 2 40 6 60 16" stroke="#2f343d" stroke-width="6" opacity=".6"/>
<path d="M205 128c10 12 24 24 40 34" stroke="#55606c" stroke-width="6" opacity=".5"/>
<path d="M112 136c6 2 12 3 18 8" stroke="#333944" stroke-width="5" opacity=".7"/>
</g>
<ellipse cx="156.500" cy="89" rx="59" ry="46" fill="#23262c" opacity=".45" filter="url(#p1b1)"/>
<ellipse cx="155.700" cy="85.900" rx="58.600" ry="46" fill="url(#p1pl)" transform="rotate(-6 155.700 85.900)"/>
<ellipse cx="155" cy="86" rx="44" ry="33.500" fill="#dddbd9" opacity=".6" transform="rotate(-6 155 86)"/>
<ellipse cx="153" cy="84" rx="42" ry="31.500" fill="#ebe9e7" opacity=".9" transform="rotate(-6 153 84)"/>
<ellipse cx="157" cy="95" rx="30" ry="17" fill="#a8a29a" opacity=".55" filter="url(#p1b1)"/>
<path d="M125.500 80c0-14 13.500-23.500 30.500-23.500s30.500 9.500 30.500 23.500c0 6-2.500 13-5.500 19.500-3.500 7.500-12.500 11.500-23.500 11.500s-20.500-3.500-24.500-10.500c-3.500-6.500-7.500-14.500-7.500-20.500z" fill="#dccb9c"/>
<path d="M131 96c5 9 14 13 26 13s20-4 24-12" fill="none" stroke="#bda876" stroke-width="5" opacity=".7"/>
<ellipse cx="156" cy="79.500" rx="30.500" ry="23" fill="#efe3bf"/>
<path d="M133 78c0-9 5-16 13-19 5-2 9-1 12 1 4-3 10-4 15-2 7 3 10 10 9.500 17-.5 8-4.500 15-11.500 19.500-6 4-15 5-22 3-9-2.500-16-10-16-19.500z" fill="#d3172b"/>
<path d="M160 62c5-2 11-1 14 3 2 3 2 7 1 10" fill="none" stroke="#f4606c" stroke-width="3" stroke-linecap="round" opacity=".8" filter="url(#p1b2)"/>
<path d="M138 70c2-4 6-7 10-8" fill="none" stroke="#ee4554" stroke-width="2.500" stroke-linecap="round" opacity=".8"/>
<circle cx="145" cy="74.700" r="7.600" fill="#262d40"/><circle cx="144.500" cy="73" r="4" fill="#46516b" opacity=".8"/><circle cx="145" cy="73.500" r="1.600" fill="#151923"/>
<circle cx="161.900" cy="83.700" r="8.400" fill="#283047"/><circle cx="162" cy="82" r="4.600" fill="#4a5672" opacity=".8"/><circle cx="162.500" cy="82.500" r="1.700" fill="#151923"/>
<circle cx="144" cy="90.600" r="8" fill="#252c40"/><circle cx="143.500" cy="89" r="4.300" fill="#434e69" opacity=".8"/><circle cx="144" cy="89.500" r="1.600" fill="#151923"/>
<ellipse cx="180.600" cy="58.700" rx="11.500" ry="21" fill="url(#p1sp)" transform="rotate(-27 180.600 58.700)"/>
<ellipse cx="179.500" cy="57" rx="7" ry="16" fill="#4a4f58" opacity=".55" transform="rotate(-27 179.500 57)"/>
<path d="M191.500 76.500c3 5 5.500 9 9 14l42 60c1.500 3 4 6 5.500 10 2 1.500 5 3.500 6.500 6.500" fill="none" stroke="#5d626b" stroke-width="4.200" stroke-linecap="round"/>
<path d="M191.500 76.500c3 5 5.500 9 9 14l42 60c1.500 3 4 6 5.500 10 2 1.500 5 3.500 6.500 6.500" fill="none" stroke="#d9dbdf" stroke-width="2.200" stroke-linecap="round"/>
<ellipse cx="249" cy="160" rx="3.600" ry="6.500" fill="#c3c6cb" transform="rotate(-35 249 160)" stroke="#5d626b" stroke-width=".8"/>
</g></svg>
<svg style="left:14px;top:236px" width="120" height="22" viewBox="0 0 120 22">
<circle cx="4.100" cy="10.500" r="1.650" fill="#111"/><circle cx="9.900" cy="10.500" r="1.650" fill="#111"/><circle cx="15.700" cy="10.500" r="1.650" fill="#111"/>
<g fill="none" stroke="#1c1c1c" stroke-width="1.300" stroke-linejoin="round" stroke-linecap="round"><path d="M35.400 7.900l6.100-1.700 6.400 6.800-5.600 6-6.900-6.900z"/><path d="M38 4.400l6-.5 6.700 6.900-1.200 2"/><circle cx="38.800" cy="9.600" r=".500" fill="#1c1c1c"/></g>
<path d="M76 5.600c3.700 0 6.700 2.100 8.200 5.100-1.500 3-4.500 5.100-8.200 5.100s-6.700-2.100-8.200-5.100c1.500-3 4.500-5.100 8.200-5.100z" fill="#111"/><circle cx="76" cy="10.700" r="2.900" fill="#f1f1f1"/><circle cx="76" cy="10.700" r="1.250" fill="#111"/>
<g stroke="#111" stroke-width="1.700" fill="#111" stroke-linecap="butt"><path d="M103.400 16.700l3.600-3.600M110.400 9.700l4-4" fill="none" stroke-width="1.900"/><path d="M100.800 19.100v-6.200l6.200 6.200z" stroke="none"/><path d="M117.200 2.900v6.200L111 2.900z" stroke="none"/></g>
</svg>
<div class="plus" style="left:245.500px;top:232.500px"></div><svg style="left:252px;top:239px" width="16" height="16" viewBox="0 0 16 16" fill="none" stroke="#111" stroke-width="2"><path d="M8 0v16M0 8h16"/></svg>
</div>
<div class="pc" style="left:1406px;top:256px">
<svg style="left:49px;top:8px;overflow:hidden" width="184" height="216" viewBox="0 0 184 216"><defs>
<linearGradient id="p2sky" x1="0" y1="0" x2="0" y2="1"><stop offset="0" stop-color="#8bbbe6"/><stop offset=".3" stop-color="#9cc6e9"/><stop offset=".5" stop-color="#b4d2e8"/><stop offset=".62" stop-color="#cbdbe3"/><stop offset="1" stop-color="#cbdbe3"/></linearGradient>
<linearGradient id="p2path" x1="0" y1="0" x2="0" y2="1"><stop offset="0" stop-color="#e9dccb"/><stop offset="1" stop-color="#e3dace"/></linearGradient>
<clipPath id="p2env"><path d="M74.600 18.700c26 0 46.400 19 46.400 43 0 20-18 36-34.800 52.800H64.500C50 98 29.200 82 29.200 60c0-22 19.400-41.300 45.400-41.300z"/></clipPath>
<filter id="p2b" x="-10%" y="-10%" width="120%" height="120%"><feGaussianBlur stdDeviation=".45"/></filter>
<filter id="p2b2" x="-10%" y="-10%" width="120%" height="120%"><feGaussianBlur stdDeviation="1.300"/></filter>
</defs>
<rect width="184" height="216" fill="url(#p2sky)"/>
<g filter="url(#p2b)">
<path d="M0 133l30-1 30-3 25-2 20-1 8-2.500 6-2 6 1 8 2 7-1.500 7-1 6 1.500 8-1.500 8 1 7 1.500 8 .5V140H0z" fill="#b5a48a"/>
<path d="M92 127.500l13-1.500 8-2.500 6-2 6 1 8 2 7-1.500 7-1 6 1.500 8-1.500 8 1 7 1.500 8 .5v4l-92 3z" fill="#8a8d96" opacity=".85"/>
<rect x="0" y="132" width="184" height="84" fill="#aaa195"/>
<path d="M0 133l60-3 50-2 74-1v12l-60 5-70 3-54 2z" fill="#c2ab82"/>
<path d="M0 137l40-2 40-1 30 0-4 6-30 4-40 4-36 4z" fill="#8d8a82" opacity=".9"/>
<path d="M4 146c8-4 18-4 24 0l4 10-8 8-18 2z" fill="#5f6258" opacity=".8"/>
<path d="M34 142c8-3 16-2 22 2l2 8-10 4-12-4z" fill="#6e6e66" opacity=".7"/>
<path d="M60 138l50-4 8 6-14 8-40 4z" fill="#cfc3af"/>
<path d="M70 142c10-3 22-3 30 0l-4 8-20 2z" fill="#7d7b74" opacity=".6"/>
<path d="M118 131l66-4v24l-30 8-22 6-12-16z" fill="#ddc191"/>
<path d="M128 146l56-16v22l-40 12z" fill="#d9b475"/>
<path d="M0 152c10-4 18-4 26 0l8 8 10-6 8 2 10 12 14 4 10-14 8-2 8 8 10 4 6-10 6-4 8 12-40 32-40 18H0z" fill="#a39c92"/>
<path d="M28 156c3-6 6-8 9-4l6 16-12 8z" fill="#77746e"/><path d="M26 156c1-3 3-5 5-5l-2 22-6 2z" fill="#e3ddd4"/>
<path d="M60 152c3-8 8-8 11 0l4 18-14 4z" fill="#837e77"/><path d="M58 154c1-4 3-6 5-6l-1 24-7 2z" fill="#e6e0d7"/>
<path d="M68 166c4-10 8-10 12 0l3 16-16 2z" fill="#958f86"/><path d="M66 168c1-5 3-8 6-9l-2 24-6 1z" fill="#e0d9cf"/>
<path d="M88 156c3-6 6-6 9 0l4 12-12 4z" fill="#cfc8bd"/><path d="M95 154c2 2 4 8 5 14l-5 2z" fill="#8a857d"/>
<path d="M104 150c3-8 7-8 9 0l5 14-16 4z" fill="#e2dbd1"/><path d="M111 148c2 3 4 9 6 15l-5 2z" fill="#9a948b"/>
<path d="M40 176c6-12 14-16 22-8l12 22-30 14z" fill="#e3dcd2"/><path d="M58 170c4 4 10 12 14 20l-10 5z" fill="#a49d92"/>
<path d="M2 170c4-8 8-10 12-4l6 20-18 6z" fill="#dad2c6"/><path d="M12 168c3 4 6 12 8 18l-7 3z" fill="#8f897f"/>
<path d="M0 196c6-12 16-18 24-10l10 30H0z" fill="#cdc1ae"/><path d="M20 184c4-6 10-6 14 0l6 16-18 4z" fill="#8a8278"/>
<path d="M184 144v72H56l16-12 28-16 20-14 16-10 22-10z" fill="url(#p2path)"/>
<path d="M124 136c-4 5-10 8-14 13-6 6-14 8-20 14-8 7-18 9-26 16-6 5-14 8-18 14 8-1 14-6 22-8 10-4 16-10 26-14 8-5 14-12 22-16 6-4 10-10 14-14z" fill="#f0ebe4" opacity=".9" filter="url(#p2b2)"/>
<path d="M100 160c14-6 30-12 44-14l-24 22-36 22-14 6z" fill="#ece5da" opacity=".8"/>
<path d="M150 150l34-12v14l-30 14z" fill="#dcb87c" opacity=".85"/>
<path d="M28 216c4-12 14-20 26-22 10-2 22-4 30 0 4 4 2 10-4 14l-10 8z" fill="#c5954a"/>
<path d="M36 216c4-8 10-14 20-16l-6 16zM62 200c6-6 14-10 22-10l-10 12z" fill="#dcae5e" opacity=".9"/>
<path d="M64 196c6-8 16-14 28-18l14-6-8 10-20 16z" fill="#d2a75e" opacity=".9"/>
</g>
<g filter="url(#p2b)">
<g clip-path="url(#p2env)">
<rect x="25" y="15" width="100" height="104" fill="#2b4e9f"/>
<path d="M72.3 18.8 L55.4 22.8 L48.1 26.8 L42.9 30.8 L39.0 34.8 L36.0 38.7 L33.6 42.7 L31.8 46.7 L30.5 50.7 L29.6 54.7 L29.1 58.7 L29.0 62.7 L29.4 66.7 L30.2 70.6 L31.5 74.6 L33.3 78.6 L35.5 82.6 L38.1 86.6 L41.1 90.6 L44.4 94.6 L48.0 98.5 L51.8 102.5 L55.8 106.5 L59.8 110.5 L63.8 114.5 L64.2 114.5 L60.3 110.5 L56.4 106.5 L52.6 102.5 L48.9 98.5 L45.5 94.6 L42.3 90.6 L39.4 86.6 L36.8 82.6 L34.7 78.6 L33.0 74.6 L31.7 70.6 L30.9 66.7 L30.6 62.7 L30.7 58.7 L31.1 54.7 L32.0 50.7 L33.3 46.7 L35.0 42.7 L37.3 38.7 L40.3 34.8 L44.0 30.8 L49.0 26.8 L56.0 22.8 L72.4 18.8z" fill="#50588c"/>
<path d="M72.4 18.8 L56.0 22.8 L49.0 26.8 L44.0 30.8 L40.3 34.8 L37.3 38.7 L35.0 42.7 L33.3 46.7 L32.0 50.7 L31.1 54.7 L30.7 58.7 L30.6 62.7 L30.9 66.7 L31.7 70.6 L33.0 74.6 L34.7 78.6 L36.8 82.6 L39.4 86.6 L42.3 90.6 L45.5 94.6 L48.9 98.5 L52.6 102.5 L56.4 106.5 L60.3 110.5 L64.2 114.5 L65.3 114.5 L61.8 110.5 L58.3 106.5 L54.9 102.5 L51.6 98.5 L48.5 94.6 L45.6 90.6 L43.0 86.6 L40.8 82.6 L38.9 78.6 L37.3 74.6 L36.2 70.6 L35.5 66.7 L35.2 62.7 L35.3 58.7 L35.7 54.7 L36.5 50.7 L37.6 46.7 L39.2 42.7 L41.2 38.7 L43.9 34.8 L47.2 30.8 L51.7 26.8 L58.0 22.8 L72.6 18.8z" fill="#74759a"/>
<path d="M72.6 18.8 L58.0 22.8 L51.7 26.8 L47.2 30.8 L43.9 34.8 L41.2 38.7 L39.2 42.7 L37.6 46.7 L36.5 50.7 L35.7 54.7 L35.3 58.7 L35.2 62.7 L35.5 66.7 L36.2 70.6 L37.3 74.6 L38.9 78.6 L40.8 82.6 L43.0 86.6 L45.6 90.6 L48.5 94.6 L51.6 98.5 L54.9 102.5 L58.3 106.5 L61.8 110.5 L65.3 114.5 L67.1 114.5 L64.2 110.5 L61.4 106.5 L58.6 102.5 L55.9 98.5 L53.4 94.6 L51.0 90.6 L48.9 86.6 L47.1 82.6 L45.5 78.6 L44.2 74.6 L43.3 70.6 L42.7 66.7 L42.5 62.7 L42.6 58.7 L42.9 54.7 L43.5 50.7 L44.5 46.7 L45.8 42.7 L47.4 38.7 L49.6 34.8 L52.3 30.8 L56.0 26.8 L61.1 22.8 L73.1 18.8z" fill="#50588c"/>
<path d="M73.1 18.8 L61.1 22.8 L56.0 26.8 L52.3 30.8 L49.6 34.8 L47.4 38.7 L45.8 42.7 L44.5 46.7 L43.5 50.7 L42.9 54.7 L42.6 58.7 L42.5 62.7 L42.7 66.7 L43.3 70.6 L44.2 74.6 L45.5 78.6 L47.1 82.6 L48.9 86.6 L51.0 90.6 L53.4 94.6 L55.9 98.5 L58.6 102.5 L61.4 106.5 L64.2 110.5 L67.1 114.5 L69.4 114.5 L67.4 110.5 L65.4 106.5 L63.4 102.5 L61.5 98.5 L59.7 94.6 L58.0 90.6 L56.6 86.6 L55.2 82.6 L54.1 78.6 L53.3 74.6 L52.6 70.6 L52.2 66.7 L52.0 62.7 L52.1 58.7 L52.3 54.7 L52.7 50.7 L53.4 46.7 L54.3 42.7 L55.5 38.7 L57.0 34.8 L59.0 30.8 L61.5 26.8 L65.2 22.8 L73.6 18.8z" fill="#74759a"/>
<path d="M73.6 18.8 L65.2 22.8 L61.5 26.8 L59.0 30.8 L57.0 34.8 L55.5 38.7 L54.3 42.7 L53.4 46.7 L52.7 50.7 L52.3 54.7 L52.1 58.7 L52.0 62.7 L52.2 66.7 L52.6 70.6 L53.3 74.6 L54.1 78.6 L55.2 82.6 L56.6 86.6 L58.0 90.6 L59.7 94.6 L61.5 98.5 L63.4 102.5 L65.4 106.5 L67.4 110.5 L69.4 114.5 L72.1 114.5 L71.1 110.5 L70.0 106.5 L69.0 102.5 L68.0 98.5 L67.1 94.6 L66.2 90.6 L65.5 86.6 L64.8 82.6 L64.2 78.6 L63.7 74.6 L63.4 70.6 L63.2 66.7 L63.1 62.7 L63.1 58.7 L63.2 54.7 L63.5 50.7 L63.8 46.7 L64.3 42.7 L64.9 38.7 L65.7 34.8 L66.7 30.8 L68.0 26.8 L69.9 22.8 L74.3 18.8z" fill="#50588c"/>
<path d="M74.3 18.8 L69.9 22.8 L68.0 26.8 L66.7 30.8 L65.7 34.8 L64.9 38.7 L64.3 42.7 L63.8 46.7 L63.5 50.7 L63.2 54.7 L63.1 58.7 L63.1 62.7 L63.2 66.7 L63.4 70.6 L63.7 74.6 L64.2 78.6 L64.8 82.6 L65.5 86.6 L66.2 90.6 L67.1 94.6 L68.0 98.5 L69.0 102.5 L70.0 106.5 L71.1 110.5 L72.1 114.5 L75.0 114.5 L75.0 110.5 L75.0 106.5 L75.0 102.5 L75.0 98.5 L75.0 94.6 L75.0 90.6 L75.0 86.6 L75.0 82.6 L75.0 78.6 L75.0 74.6 L75.0 70.6 L75.0 66.7 L75.0 62.7 L75.0 58.7 L75.0 54.7 L75.0 50.7 L75.0 46.7 L75.0 42.7 L75.0 38.7 L75.0 34.8 L75.0 30.8 L75.0 26.8 L75.0 22.8 L75.0 18.8z" fill="#74759a"/>
<path d="M75.0 18.8 L75.0 22.8 L75.0 26.8 L75.0 30.8 L75.0 34.8 L75.0 38.7 L75.0 42.7 L75.0 46.7 L75.0 50.7 L75.0 54.7 L75.0 58.7 L75.0 62.7 L75.0 66.7 L75.0 70.6 L75.0 74.6 L75.0 78.6 L75.0 82.6 L75.0 86.6 L75.0 90.6 L75.0 94.6 L75.0 98.5 L75.0 102.5 L75.0 106.5 L75.0 110.5 L75.0 114.5 L77.9 114.5 L78.9 110.5 L80.0 106.5 L81.0 102.5 L82.0 98.5 L82.9 94.6 L83.8 90.6 L84.5 86.6 L85.2 82.6 L85.8 78.6 L86.3 74.6 L86.6 70.6 L86.8 66.7 L86.9 62.7 L86.9 58.7 L86.8 54.7 L86.5 50.7 L86.2 46.7 L85.7 42.7 L85.1 38.7 L84.3 34.8 L83.3 30.8 L82.0 26.8 L80.1 22.8 L75.7 18.8z" fill="#2a4da2"/>
<path d="M75.7 18.8 L80.1 22.8 L82.0 26.8 L83.3 30.8 L84.3 34.8 L85.1 38.7 L85.7 42.7 L86.2 46.7 L86.5 50.7 L86.8 54.7 L86.9 58.7 L86.9 62.7 L86.8 66.7 L86.6 70.6 L86.3 74.6 L85.8 78.6 L85.2 82.6 L84.5 86.6 L83.8 90.6 L82.9 94.6 L82.0 98.5 L81.0 102.5 L80.0 106.5 L78.9 110.5 L77.9 114.5 L80.6 114.5 L82.6 110.5 L84.6 106.5 L86.6 102.5 L88.5 98.5 L90.3 94.6 L92.0 90.6 L93.4 86.6 L94.8 82.6 L95.9 78.6 L96.7 74.6 L97.4 70.6 L97.8 66.7 L98.0 62.7 L97.9 58.7 L97.7 54.7 L97.3 50.7 L96.6 46.7 L95.7 42.7 L94.5 38.7 L93.0 34.8 L91.0 30.8 L88.5 26.8 L84.8 22.8 L76.4 18.8z" fill="#2f55a8"/>
<path d="M76.4 18.8 L84.8 22.8 L88.5 26.8 L91.0 30.8 L93.0 34.8 L94.5 38.7 L95.7 42.7 L96.6 46.7 L97.3 50.7 L97.7 54.7 L97.9 58.7 L98.0 62.7 L97.8 66.7 L97.4 70.6 L96.7 74.6 L95.9 78.6 L94.8 82.6 L93.4 86.6 L92.0 90.6 L90.3 94.6 L88.5 98.5 L86.6 102.5 L84.6 106.5 L82.6 110.5 L80.6 114.5 L82.9 114.5 L85.8 110.5 L88.6 106.5 L91.4 102.5 L94.1 98.5 L96.6 94.6 L99.0 90.6 L101.1 86.6 L102.9 82.6 L104.5 78.6 L105.8 74.6 L106.7 70.6 L107.3 66.7 L107.5 62.7 L107.4 58.7 L107.1 54.7 L106.5 50.7 L105.5 46.7 L104.2 42.7 L102.6 38.7 L100.4 34.8 L97.7 30.8 L94.0 26.8 L88.9 22.8 L76.9 18.8z" fill="#2a4da2"/>
<path d="M76.9 18.8 L88.9 22.8 L94.0 26.8 L97.7 30.8 L100.4 34.8 L102.6 38.7 L104.2 42.7 L105.5 46.7 L106.5 50.7 L107.1 54.7 L107.4 58.7 L107.5 62.7 L107.3 66.7 L106.7 70.6 L105.8 74.6 L104.5 78.6 L102.9 82.6 L101.1 86.6 L99.0 90.6 L96.6 94.6 L94.1 98.5 L91.4 102.5 L88.6 106.5 L85.8 110.5 L82.9 114.5 L84.7 114.5 L88.2 110.5 L91.7 106.5 L95.1 102.5 L98.4 98.5 L101.5 94.6 L104.4 90.6 L107.0 86.6 L109.2 82.6 L111.1 78.6 L112.7 74.6 L113.8 70.6 L114.5 66.7 L114.8 62.7 L114.7 58.7 L114.3 54.7 L113.5 50.7 L112.4 46.7 L110.8 42.7 L108.8 38.7 L106.1 34.8 L102.8 30.8 L98.3 26.8 L92.0 22.8 L77.4 18.8z" fill="#23458f"/>
<path d="M77.4 18.8 L92.0 22.8 L98.3 26.8 L102.8 30.8 L106.1 34.8 L108.8 38.7 L110.8 42.7 L112.4 46.7 L113.5 50.7 L114.3 54.7 L114.7 58.7 L114.8 62.7 L114.5 66.7 L113.8 70.6 L112.7 74.6 L111.1 78.6 L109.2 82.6 L107.0 86.6 L104.4 90.6 L101.5 94.6 L98.4 98.5 L95.1 102.5 L91.7 106.5 L88.2 110.5 L84.7 114.5 L85.8 114.5 L89.7 110.5 L93.6 106.5 L97.4 102.5 L101.1 98.5 L104.5 94.6 L107.7 90.6 L110.6 86.6 L113.2 82.6 L115.3 78.6 L117.0 74.6 L118.3 70.6 L119.1 66.7 L119.4 62.7 L119.3 58.7 L118.9 54.7 L118.0 50.7 L116.7 46.7 L115.0 42.7 L112.7 38.7 L109.7 34.8 L106.0 30.8 L101.0 26.8 L94.0 22.8 L77.6 18.8z" fill="#1f3f88"/>
<path d="M77.6 18.8 L94.0 22.8 L101.0 26.8 L106.0 30.8 L109.7 34.8 L112.7 38.7 L115.0 42.7 L116.7 46.7 L118.0 50.7 L118.9 54.7 L119.3 58.7 L119.4 62.7 L119.1 66.7 L118.3 70.6 L117.0 74.6 L115.3 78.6 L113.2 82.6 L110.6 86.6 L107.7 90.6 L104.5 94.6 L101.1 98.5 L97.4 102.5 L93.6 106.5 L89.7 110.5 L85.8 114.5 L86.2 114.5 L90.2 110.5 L94.2 106.5 L98.2 102.5 L102.0 98.5 L105.6 94.6 L108.9 90.6 L111.9 86.6 L114.5 82.6 L116.7 78.6 L118.5 74.6 L119.8 70.6 L120.6 66.7 L121.0 62.7 L120.9 58.7 L120.4 54.7 L119.5 50.7 L118.2 46.7 L116.4 42.7 L114.0 38.7 L111.0 34.8 L107.1 30.8 L101.9 26.8 L94.6 22.8 L77.7 18.8z" fill="#23458f"/>
<path d="M56.1 22.5 L53.9 23.5 L51.9 24.5 L50.2 25.4 L48.6 26.4 L47.2 27.4 L45.8 28.4 L44.6 29.4 L43.4 30.3 L42.3 31.3 L41.3 32.3 L40.4 33.3 L39.5 34.2 L38.6 35.2 L37.8 36.2 L37.1 37.2 L36.4 38.2 L35.7 39.1 L35.1 40.1 L34.5 41.1 L34.0 42.1 L33.5 43.1 L33.0 44.0 L32.5 45.0 L32.1 46.0 L33.3 46.0 L33.7 45.0 L34.2 44.0 L34.7 43.1 L35.2 42.1 L35.7 41.1 L36.3 40.1 L36.9 39.1 L37.5 38.2 L38.2 37.2 L38.9 36.2 L39.7 35.2 L40.5 34.2 L41.4 33.3 L42.3 32.3 L43.3 31.3 L44.3 30.3 L45.5 29.4 L46.7 28.4 L48.0 27.4 L49.4 26.4 L50.9 25.4 L52.6 24.5 L54.5 23.5 L56.6 22.5z" fill="#e2c84a"/>
<ellipse cx="32.7" cy="46" rx="0.6" ry="3.2" fill="#e2c84a"/>
<path d="M30.3 71.0 L30.9 72.8 L31.5 74.5 L32.2 76.3 L33.0 78.1 L33.9 79.9 L34.9 81.6 L36.0 83.4 L37.1 85.2 L38.4 86.9 L39.7 88.7 L41.0 90.5 L42.5 92.2 L44.0 94.0 L45.5 95.8 L47.1 97.6 L48.8 99.3 L50.4 101.1 L52.2 102.9 L53.9 104.6 L55.7 106.4 L57.4 108.2 L59.2 110.0 L61.0 111.7 L62.8 113.5 L63.1 113.5 L61.4 111.7 L59.7 110.0 L57.9 108.2 L56.2 106.4 L54.5 104.6 L52.8 102.9 L51.1 101.1 L49.5 99.3 L47.9 97.6 L46.4 95.8 L44.8 94.0 L43.4 92.2 L42.0 90.5 L40.7 88.7 L39.4 86.9 L38.2 85.2 L37.1 83.4 L36.1 81.6 L35.1 79.9 L34.2 78.1 L33.4 76.3 L32.7 74.5 L32.1 72.8 L31.6 71.0z" fill="#e2c84a"/>
<path d="M58.8 22.5 L56.9 23.5 L55.3 24.5 L53.8 25.4 L52.4 26.4 L51.2 27.4 L50.0 28.4 L49.0 29.4 L48.0 30.3 L47.1 31.3 L46.2 32.3 L45.4 33.3 L44.6 34.2 L43.9 35.2 L43.2 36.2 L42.6 37.2 L42.0 38.2 L41.4 39.1 L40.9 40.1 L40.4 41.1 L39.9 42.1 L39.5 43.1 L39.1 44.0 L38.7 45.0 L38.3 46.0 L44.0 46.0 L44.3 45.0 L44.7 44.0 L45.0 43.1 L45.4 42.1 L45.8 41.1 L46.2 40.1 L46.7 39.1 L47.1 38.2 L47.6 37.2 L48.2 36.2 L48.8 35.2 L49.4 34.2 L50.0 33.3 L50.7 32.3 L51.4 31.3 L52.2 30.3 L53.0 29.4 L53.9 28.4 L54.9 27.4 L56.0 26.4 L57.1 25.4 L58.4 24.5 L59.7 23.5 L61.3 22.5z" fill="#f2d84e"/>
<ellipse cx="41.2" cy="46" rx="2.9" ry="3.2" fill="#f2d84e"/>
<path d="M36.8 71.0 L37.2 72.8 L37.8 74.5 L38.4 76.3 L39.1 78.1 L39.9 79.9 L40.7 81.6 L41.6 83.4 L42.6 85.2 L43.7 86.9 L44.8 88.7 L45.9 90.5 L47.2 92.2 L48.4 94.0 L49.8 95.8 L51.1 97.6 L52.5 99.3 L54.0 101.1 L55.5 102.9 L56.9 104.6 L58.5 106.4 L60.0 108.2 L61.5 110.0 L63.0 111.7 L64.6 113.5 L66.2 113.5 L64.9 111.7 L63.6 110.0 L62.3 108.2 L61.0 106.4 L59.8 104.6 L58.5 102.9 L57.3 101.1 L56.1 99.3 L54.9 97.6 L53.7 95.8 L52.6 94.0 L51.5 92.2 L50.5 90.5 L49.5 88.7 L48.5 86.9 L47.7 85.2 L46.8 83.4 L46.1 81.6 L45.3 79.9 L44.7 78.1 L44.1 76.3 L43.6 74.5 L43.1 72.8 L42.7 71.0z" fill="#f2d84e"/>
<path d="M65.9 22.5 L64.8 23.5 L63.9 24.5 L63.1 25.4 L62.3 26.4 L61.6 27.4 L60.9 28.4 L60.3 29.4 L59.8 30.3 L59.3 31.3 L58.8 32.3 L58.3 33.3 L57.9 34.2 L57.5 35.2 L57.1 36.2 L56.7 37.2 L56.4 38.2 L56.1 39.1 L55.8 40.1 L55.5 41.1 L55.2 42.1 L55.0 43.1 L54.8 44.0 L54.5 45.0 L54.3 46.0 L63.0 46.0 L63.1 45.0 L63.3 44.0 L63.4 43.1 L63.6 42.1 L63.7 41.1 L63.9 40.1 L64.0 39.1 L64.2 38.2 L64.4 37.2 L64.6 36.2 L64.9 35.2 L65.1 34.2 L65.3 33.3 L65.6 32.3 L65.9 31.3 L66.2 30.3 L66.5 29.4 L66.9 28.4 L67.2 27.4 L67.6 26.4 L68.1 25.4 L68.6 24.5 L69.1 23.5 L69.7 22.5z" fill="#f2d84e"/>
<ellipse cx="58.7" cy="46" rx="4.3" ry="3.2" fill="#f2d84e"/>
<path d="M53.5 71.0 L53.7 72.8 L54.0 74.5 L54.4 76.3 L54.8 78.1 L55.2 79.9 L55.7 81.6 L56.2 83.4 L56.8 85.2 L57.3 86.9 L58.0 88.7 L58.6 90.5 L59.3 92.2 L60.0 94.0 L60.8 95.8 L61.6 97.6 L62.4 99.3 L63.2 101.1 L64.0 102.9 L64.8 104.6 L65.7 106.4 L66.5 108.2 L67.4 110.0 L68.3 111.7 L69.1 113.5 L71.6 113.5 L71.1 111.7 L70.6 110.0 L70.1 108.2 L69.6 106.4 L69.1 104.6 L68.6 102.9 L68.1 101.1 L67.7 99.3 L67.2 97.6 L66.8 95.8 L66.3 94.0 L65.9 92.2 L65.5 90.5 L65.1 88.7 L64.8 86.9 L64.4 85.2 L64.1 83.4 L63.8 81.6 L63.5 79.9 L63.3 78.1 L63.1 76.3 L62.9 74.5 L62.7 72.8 L62.5 71.0z" fill="#f2d84e"/>
<path d="M75.4 22.5 L75.4 23.5 L75.5 24.5 L75.5 25.4 L75.6 26.4 L75.6 27.4 L75.6 28.4 L75.6 29.4 L75.7 30.3 L75.7 31.3 L75.7 32.3 L75.7 33.3 L75.7 34.2 L75.8 35.2 L75.8 36.2 L75.8 37.2 L75.8 38.2 L75.8 39.1 L75.8 40.1 L75.8 41.1 L75.9 42.1 L75.9 43.1 L75.9 44.0 L75.9 45.0 L75.9 46.0 L85.2 46.0 L85.1 45.0 L85.0 44.0 L84.9 43.1 L84.8 42.1 L84.7 41.1 L84.5 40.1 L84.4 39.1 L84.2 38.2 L84.0 37.2 L83.9 36.2 L83.7 35.2 L83.5 34.2 L83.3 33.3 L83.0 32.3 L82.8 31.3 L82.5 30.3 L82.3 29.4 L82.0 28.4 L81.6 27.4 L81.3 26.4 L80.9 25.4 L80.5 24.5 L80.0 23.5 L79.5 22.5z" fill="#f2d84e"/>
<ellipse cx="80.6" cy="46" rx="4.7" ry="3.2" fill="#f2d84e"/>
<path d="M75.9 71.0 L75.9 72.8 L75.9 74.5 L75.9 76.3 L75.9 78.1 L75.9 79.9 L75.8 81.6 L75.8 83.4 L75.8 85.2 L75.8 86.9 L75.7 88.7 L75.7 90.5 L75.7 92.2 L75.7 94.0 L75.6 95.8 L75.6 97.6 L75.5 99.3 L75.5 101.1 L75.5 102.9 L75.4 104.6 L75.4 106.4 L75.4 108.2 L75.3 110.0 L75.3 111.7 L75.3 113.5 L77.9 113.5 L78.3 111.7 L78.8 110.0 L79.2 108.2 L79.6 106.4 L80.0 104.6 L80.4 102.9 L80.9 101.1 L81.3 99.3 L81.7 97.6 L82.0 95.8 L82.4 94.0 L82.8 92.2 L83.1 90.5 L83.4 88.7 L83.7 86.9 L84.0 85.2 L84.3 83.4 L84.6 81.6 L84.8 79.9 L85.0 78.1 L85.2 76.3 L85.4 74.5 L85.5 72.8 L85.7 71.0z" fill="#f2d84e"/>
<path d="M84.8 22.5 L86.0 23.5 L86.9 24.5 L87.8 25.4 L88.7 26.4 L89.4 27.4 L90.1 28.4 L90.8 29.4 L91.4 30.3 L91.9 31.3 L92.4 32.3 L92.9 33.3 L93.4 34.2 L93.8 35.2 L94.3 36.2 L94.6 37.2 L95.0 38.2 L95.3 39.1 L95.7 40.1 L96.0 41.1 L96.3 42.1 L96.5 43.1 L96.8 44.0 L97.0 45.0 L97.2 46.0 L104.7 46.0 L104.4 45.0 L104.1 44.0 L103.8 43.1 L103.4 42.1 L103.0 41.1 L102.6 40.1 L102.2 39.1 L101.7 38.2 L101.2 37.2 L100.7 36.2 L100.2 35.2 L99.6 34.2 L99.0 33.3 L98.3 32.3 L97.6 31.3 L96.9 30.3 L96.1 29.4 L95.2 28.4 L94.3 27.4 L93.3 26.4 L92.2 25.4 L91.0 24.5 L89.6 23.5 L88.1 22.5z" fill="#f2d84e"/>
<ellipse cx="101.0" cy="46" rx="3.7" ry="3.2" fill="#f2d84e"/>
<path d="M98.2 71.0 L97.9 72.8 L97.5 74.5 L97.2 76.3 L96.7 78.1 L96.3 79.9 L95.8 81.6 L95.2 83.4 L94.6 85.2 L94.0 86.9 L93.3 88.7 L92.6 90.5 L91.9 92.2 L91.1 94.0 L90.3 95.8 L89.4 97.6 L88.6 99.3 L87.7 101.1 L86.8 102.9 L85.9 104.6 L85.0 106.4 L84.1 108.2 L83.2 110.0 L82.2 111.7 L81.3 113.5 L83.4 113.5 L84.7 111.7 L85.9 110.0 L87.2 108.2 L88.4 106.4 L89.6 104.6 L90.8 102.9 L92.0 101.1 L93.2 99.3 L94.3 97.6 L95.4 95.8 L96.5 94.0 L97.5 92.2 L98.5 90.5 L99.5 88.7 L100.4 86.9 L101.2 85.2 L102.0 83.4 L102.8 81.6 L103.4 79.9 L104.1 78.1 L104.6 76.3 L105.1 74.5 L105.6 72.8 L105.9 71.0z" fill="#f2d84e"/>
<path d="M91.6 22.5 L93.5 23.5 L95.2 24.5 L96.7 25.4 L98.1 26.4 L99.4 27.4 L100.6 28.4 L101.7 29.4 L102.7 30.3 L103.6 31.3 L104.5 32.3 L105.3 33.3 L106.1 34.2 L106.9 35.2 L107.6 36.2 L108.2 37.2 L108.8 38.2 L109.4 39.1 L110.0 40.1 L110.5 41.1 L111.0 42.1 L111.4 43.1 L111.8 44.0 L112.2 45.0 L112.6 46.0 L116.2 46.0 L115.8 45.0 L115.4 44.0 L114.9 43.1 L114.4 42.1 L113.9 41.1 L113.3 40.1 L112.7 39.1 L112.1 38.2 L111.4 37.2 L110.7 36.2 L109.9 35.2 L109.1 34.2 L108.3 33.3 L107.3 32.3 L106.4 31.3 L105.3 30.3 L104.2 29.4 L103.0 28.4 L101.7 27.4 L100.3 26.4 L98.8 25.4 L97.2 24.5 L95.3 23.5 L93.2 22.5z" fill="#e2c84a"/>
<ellipse cx="114.4" cy="46" rx="1.8" ry="3.2" fill="#e2c84a"/>
<path d="M114.2 71.0 L113.7 72.8 L113.1 74.5 L112.5 76.3 L111.8 78.1 L111.0 79.9 L110.1 81.6 L109.2 83.4 L108.2 85.2 L107.1 86.9 L106.0 88.7 L104.8 90.5 L103.5 92.2 L102.2 94.0 L100.8 95.8 L99.4 97.6 L98.0 99.3 L96.5 101.1 L95.0 102.9 L93.5 104.6 L91.9 106.4 L90.4 108.2 L88.8 110.0 L87.3 111.7 L85.7 113.5 L86.7 113.5 L88.4 111.7 L90.1 110.0 L91.9 108.2 L93.6 106.4 L95.3 104.6 L96.9 102.9 L98.6 101.1 L100.2 99.3 L101.8 97.6 L103.3 95.8 L104.8 94.0 L106.2 92.2 L107.6 90.5 L108.9 88.7 L110.2 86.9 L111.4 85.2 L112.5 83.4 L113.5 81.6 L114.5 79.9 L115.3 78.1 L116.1 76.3 L116.8 74.5 L117.4 72.8 L117.9 71.0z" fill="#e2c84a"/>
<ellipse cx="52" cy="50" rx="14" ry="34" fill="#fff" opacity=".08"/><path d="M108 30c10 12 14 26 12 40-2 14-14 28-30 44h20V30z" fill="#0b1f55" opacity=".25"/>
</g>
<path d="M64.500 114.500h21.700l-3 6-5 7.500-8-7.500z" fill="#e8321c"/>
<path d="M70 118h12l-3.800 10z" fill="#f04a26"/>
<rect x="72" y="131" width="12" height="6" fill="#6a6258" opacity=".7"/>
<ellipse cx="146.600" cy="75.200" rx="3" ry="3.300" fill="#eeeae6"/><path d="M144.300 77l2.300 3.500 2.300-3.500z" fill="#9a968f"/>
<path d="M123.500 153c1-3 10-3 11.500 0l1.500 28-3 4-8-1-3.500-3z" fill="#2f8da3"/><path d="M123 176h13.500l.5 6-14 1z" fill="#1f6478"/>
<circle cx="129" cy="149.500" r="3.400" fill="#5b3626"/><path d="M126.500 184h2.300v8h-2.300zM130.500 184h2.300v8h-2.300z" fill="#6a5a48"/>
<path d="M137 153c2-4 12-4 14 0l1.500 22-4 10-6 1-5-12z" fill="#7a3a2e"/><circle cx="144.500" cy="147.500" r="4" fill="#4a2619"/><path d="M141 147c0-4 7-4 7 0l1 8h-9z" fill="#55301f"/>
<path d="M142 184h2.600v11H142zM146 184h2.600v11H146z" fill="#9a8a68"/>
</g></svg>
<svg style="left:14px;top:236px" width="120" height="22" viewBox="0 0 120 22">
<circle cx="4.100" cy="10.500" r="1.650" fill="#111"/><circle cx="9.900" cy="10.500" r="1.650" fill="#111"/><circle cx="15.700" cy="10.500" r="1.650" fill="#111"/>
<g fill="none" stroke="#1c1c1c" stroke-width="1.300" stroke-linejoin="round" stroke-linecap="round"><path d="M35.400 7.900l6.100-1.700 6.400 6.800-5.600 6-6.900-6.900z"/><path d="M38 4.400l6-.5 6.700 6.900-1.200 2"/><circle cx="38.800" cy="9.600" r=".500" fill="#1c1c1c"/></g>
<path d="M76 5.600c3.700 0 6.700 2.100 8.200 5.100-1.500 3-4.500 5.100-8.200 5.100s-6.700-2.100-8.200-5.100c1.500-3 4.500-5.100 8.200-5.100z" fill="#111"/><circle cx="76" cy="10.700" r="2.900" fill="#f1f1f1"/><circle cx="76" cy="10.700" r="1.250" fill="#111"/>
<g stroke="#111" stroke-width="1.700" fill="#111" stroke-linecap="butt"><path d="M103.400 16.700l3.600-3.600M110.400 9.700l4-4" fill="none" stroke-width="1.900"/><path d="M100.800 19.100v-6.200l6.200 6.200z" stroke="none"/><path d="M117.200 2.900v6.200L111 2.900z" stroke="none"/></g>
</svg>
<div class="plus" style="left:245.500px;top:232.500px"></div><svg style="left:252px;top:239px" width="16" height="16" viewBox="0 0 16 16" fill="none" stroke="#111" stroke-width="2"><path d="M8 0v16M0 8h16"/></svg>
</div>
<div class="pc" style="left:1120px;top:529px">
<svg style="left:8px;top:28px;overflow:hidden" width="266" height="177" viewBox="0 0 266 177"><defs>
<linearGradient id="p3sky" x1="0" y1="0" x2="0" y2="1"><stop offset="0" stop-color="#e4bb92"/><stop offset=".12" stop-color="#eeb786"/><stop offset=".3" stop-color="#f2ad7e"/><stop offset=".45" stop-color="#eea383"/><stop offset=".54" stop-color="#e39d8d"/><stop offset=".6" stop-color="#cf9a92"/><stop offset=".68" stop-color="#b48f97"/><stop offset=".78" stop-color="#887d95"/><stop offset=".88" stop-color="#646787"/><stop offset="1" stop-color="#46527a"/></linearGradient>
<linearGradient id="p3side" x1="0" y1="0" x2="1" y2="0"><stop offset="0" stop-color="#f5b070" stop-opacity=".25"/><stop offset=".5" stop-color="#f5b070" stop-opacity="0"/><stop offset="1" stop-color="#e8909a" stop-opacity=".22"/></linearGradient>
<linearGradient id="p3tw" x1="0" y1="0" x2="0" y2="1"><stop offset="0" stop-color="#7a3a36"/><stop offset=".55" stop-color="#62333a"/><stop offset="1" stop-color="#443852"/></linearGradient>
<filter id="p3b" x="-10%" y="-10%" width="120%" height="120%"><feGaussianBlur stdDeviation=".5"/></filter>
<filter id="p3b2" x="-10%" y="-10%" width="120%" height="120%"><feGaussianBlur stdDeviation="1.800"/></filter>
<filter id="p3n" x="0" y="0" width="100%" height="100%"><feTurbulence type="fractalNoise" baseFrequency=".35 .6" numOctaves="2" seed="8"/><feColorMatrix type="matrix" values="0 0 0 0 .95  0 0 0 0 .9  0 0 0 0 .95  0 0 0 2.200 -1.050"/></filter>
<filter id="p3n2" x="0" y="0" width="100%" height="100%"><feTurbulence type="fractalNoise" baseFrequency=".3 .5" numOctaves="2" seed="21"/><feColorMatrix type="matrix" values="0 0 0 0 .15  0 0 0 0 .13  0 0 0 0 .25  0 0 0 2.200 -1.100"/></filter>
</defs>
<rect width="266" height="177" fill="url(#p3sky)"/>
<rect width="266" height="100" fill="url(#p3side)"/>
<g filter="url(#p3b)" fill="#d2948a" opacity=".8"><rect x="53.2" y="66.4" width="5.6" height="30.6"/><rect x="57.3" y="59.8" width="7.2" height="37.2"/><rect x="67.9" y="62.2" width="10.7" height="34.8"/><rect x="74.0" y="74.0" width="18.8" height="23.0"/><rect x="92.8" y="69.8" width="17.9" height="27.2"/><rect x="109.8" y="70.0" width="7.5" height="27.0"/><rect x="126.7" y="61.7" width="4.2" height="35.3"/><rect x="132.4" y="67.3" width="6.0" height="29.7"/><rect x="149.4" y="64.5" width="7.5" height="32.5"/><rect x="156.9" y="60.4" width="10.4" height="36.6"/><rect x="173.0" y="60.7" width="16.0" height="36.3"/><rect x="192.8" y="57.0" width="6.6" height="40.0"/><rect x="199.4" y="66.4" width="4.6" height="30.6"/><rect x="223.9" y="77.3" width="9.4" height="19.7"/><rect x="11.3" y="70.0" width="3.7" height="27.0"/><rect x="26.8" y="70.5" width="3.8" height="26.5"/><rect x="40.0" y="72.0" width="4.0" height="25.0"/><rect x="140.0" y="76.0" width="8.0" height="21.0"/><rect x="205.0" y="80.0" width="17.0" height="17.0"/><rect x="236.0" y="82.0" width="14.0" height="15.0"/></g>
<rect x="0" y="80" width="266" height="22" fill="#df9f8e" opacity=".55" filter="url(#p3b2)"/>
<rect x="0" y="100" width="266" height="77" filter="url(#p3n)" opacity=".28"/>
<rect x="0" y="104" width="266" height="73" filter="url(#p3n2)" opacity=".4"/>
<g filter="url(#p3b)"><rect x="40.1" y="123.9" width="4.6" height="1.1" fill="#614e6a" opacity="0.31"/><rect x="135.0" y="103.5" width="2.1" height="1.3" fill="#e7c5be" opacity="0.28"/><rect x="219.9" y="131.7" width="2.6" height="1.3" fill="#5a4b69" opacity="0.48"/><rect x="105.5" y="143.4" width="7.3" height="1.1" fill="#4f4568" opacity="0.29"/><rect x="31.3" y="110.1" width="2.9" height="1.7" fill="#e2c1bf" opacity="0.45"/><rect x="99.1" y="148.2" width="5.2" height="1.1" fill="#c4abc4" opacity="0.32"/><rect x="113.7" y="151.4" width="3.9" height="2.3" fill="#c2a9c4" opacity="0.35"/><rect x="185.9" y="160.2" width="3.7" height="2.4" fill="#bba4c5" opacity="0.56"/><rect x="76.6" y="155.2" width="8.3" height="1.3" fill="#bfa7c5" opacity="0.51"/><rect x="130.1" y="110.7" width="2.1" height="1.6" fill="#6d546c" opacity="0.37"/><rect x="83.5" y="166.4" width="7.0" height="2.6" fill="#b6a0c6" opacity="0.41"/><rect x="251.3" y="163.7" width="5.3" height="2.7" fill="#b8a2c6" opacity="0.50"/><rect x="264.2" y="148.8" width="6.8" height="1.6" fill="#c4aac4" opacity="0.48"/><rect x="122.8" y="100.7" width="2.4" height="1.1" fill="#e9c6be" opacity="0.52"/><rect x="65.9" y="109.0" width="3.1" height="1.7" fill="#e3c2bf" opacity="0.41"/><rect x="235.0" y="141.3" width="6.3" height="2.6" fill="#caafc3" opacity="0.40"/><rect x="235.2" y="126.6" width="6.0" height="1.2" fill="#d5b7c1" opacity="0.33"/><rect x="129.0" y="117.0" width="4.0" height="1.3" fill="#dcbdc0" opacity="0.40"/><rect x="150.6" y="127.4" width="6.0" height="2.0" fill="#5e4d6a" opacity="0.39"/><rect x="14.4" y="151.1" width="7.4" height="2.7" fill="#484267" opacity="0.44"/><rect x="106.1" y="129.2" width="2.5" height="1.9" fill="#d3b6c1" opacity="0.27"/><rect x="43.2" y="115.1" width="3.1" height="1.1" fill="#debec0" opacity="0.30"/><rect x="96.7" y="106.8" width="2.1" height="1.7" fill="#70566c" opacity="0.24"/><rect x="92.4" y="118.4" width="3.3" height="1.1" fill="#66516b" opacity="0.50"/><rect x="128.7" y="134.9" width="2.4" height="1.2" fill="#cfb3c2" opacity="0.34"/><rect x="42.9" y="162.8" width="2.2" height="3.4" fill="#b9a2c6" opacity="0.30"/><rect x="7.2" y="140.8" width="4.8" height="2.8" fill="#514668" opacity="0.41"/><rect x="97.5" y="119.1" width="2.6" height="1.9" fill="#65506b" opacity="0.43"/><rect x="59.3" y="124.4" width="5.2" height="2.3" fill="#604e6a" opacity="0.44"/><rect x="196.8" y="162.0" width="3.6" height="2.3" fill="#b9a3c6" opacity="0.26"/><rect x="74.3" y="101.2" width="2.6" height="1.4" fill="#76596d" opacity="0.33"/><rect x="262.8" y="171.2" width="9.3" height="2.0" fill="#b29dc7" opacity="0.33"/><rect x="54.4" y="114.1" width="4.0" height="1.9" fill="#6a536c" opacity="0.34"/><rect x="212.7" y="149.3" width="2.5" height="2.4" fill="#4a4367" opacity="0.43"/><rect x="127.2" y="156.8" width="3.2" height="2.9" fill="#bda6c5" opacity="0.53"/><rect x="105.3" y="173.8" width="5.1" height="3.8" fill="#333764" opacity="0.25"/><rect x="40.2" y="108.8" width="4.5" height="1.7" fill="#e3c2bf" opacity="0.54"/><rect x="174.8" y="174.5" width="4.8" height="2.6" fill="#b09bc7" opacity="0.25"/><rect x="172.8" y="173.8" width="6.1" height="3.7" fill="#b09cc7" opacity="0.56"/><rect x="56.1" y="162.6" width="3.8" height="1.8" fill="#b9a2c6" opacity="0.46"/><rect x="111.5" y="119.0" width="2.5" height="2.0" fill="#dbbcc0" opacity="0.41"/><rect x="240.5" y="143.9" width="4.3" height="2.8" fill="#c7adc3" opacity="0.44"/><rect x="5.0" y="139.3" width="4.3" height="1.3" fill="#cbb0c3" opacity="0.53"/><rect x="125.9" y="112.3" width="4.2" height="1.5" fill="#e0c0bf" opacity="0.43"/><rect x="208.6" y="141.8" width="2.6" height="2.1" fill="#c9afc3" opacity="0.35"/><rect x="135.1" y="158.5" width="5.7" height="2.8" fill="#413e66" opacity="0.33"/><rect x="134.5" y="146.2" width="4.9" height="2.4" fill="#c6acc4" opacity="0.44"/><rect x="250.4" y="135.8" width="5.4" height="2.5" fill="#564969" opacity="0.28"/><rect x="250.9" y="142.1" width="6.5" height="1.3" fill="#c9aec3" opacity="0.40"/><rect x="64.0" y="104.6" width="2.2" height="1.5" fill="#72576d" opacity="0.47"/><rect x="190.5" y="110.9" width="3.9" height="1.1" fill="#6d546c" opacity="0.49"/><rect x="253.4" y="115.9" width="3.3" height="1.5" fill="#68526b" opacity="0.45"/><rect x="114.8" y="111.4" width="3.5" height="1.3" fill="#e1c0bf" opacity="0.36"/><rect x="5.2" y="154.6" width="5.5" height="2.0" fill="#bfa7c5" opacity="0.37"/><rect x="136.3" y="147.0" width="2.4" height="3.0" fill="#4c4467" opacity="0.49"/><rect x="70.6" y="107.1" width="2.1" height="1.6" fill="#e4c3bf" opacity="0.30"/><rect x="242.4" y="131.5" width="5.7" height="1.4" fill="#d1b4c2" opacity="0.57"/><rect x="186.3" y="142.9" width="2.5" height="1.1" fill="#504668" opacity="0.33"/><rect x="249.6" y="104.6" width="3.5" height="1.5" fill="#e6c4be" opacity="0.55"/><rect x="229.5" y="104.1" width="3.1" height="1.2" fill="#e7c5be" opacity="0.57"/><rect x="34.4" y="119.6" width="3.9" height="1.3" fill="#dabbc0" opacity="0.31"/><rect x="53.7" y="102.9" width="2.7" height="1.2" fill="#74586d" opacity="0.29"/><rect x="47.3" y="137.5" width="3.7" height="1.0" fill="#544868" opacity="0.20"/><rect x="146.6" y="155.4" width="3.2" height="2.1" fill="#444066" opacity="0.23"/><rect x="115.0" y="162.1" width="5.4" height="3.1" fill="#b9a3c6" opacity="0.43"/><rect x="261.3" y="152.0" width="4.1" height="2.8" fill="#474167" opacity="0.39"/><rect x="92.4" y="130.2" width="2.2" height="1.2" fill="#d2b5c2" opacity="0.51"/><rect x="43.4" y="118.7" width="2.3" height="2.0" fill="#66516b" opacity="0.40"/><rect x="64.4" y="120.7" width="3.1" height="1.6" fill="#dabbc0" opacity="0.41"/><rect x="255.8" y="119.3" width="5.5" height="1.6" fill="#dbbcc0" opacity="0.59"/><rect x="94.9" y="122.8" width="2.0" height="1.5" fill="#624f6a" opacity="0.35"/><rect x="134.3" y="114.5" width="2.0" height="1.3" fill="#debec0" opacity="0.39"/><rect x="6.0" y="102.2" width="2.7" height="1.1" fill="#e8c6be" opacity="0.44"/><rect x="174.9" y="156.8" width="6.7" height="3.1" fill="#bda6c5" opacity="0.36"/><rect x="39.8" y="174.8" width="7.7" height="2.9" fill="#af9bc7" opacity="0.54"/><rect x="166.9" y="167.7" width="7.4" height="3.2" fill="#b59fc6" opacity="0.43"/><rect x="222.1" y="137.8" width="6.0" height="2.5" fill="#544868" opacity="0.47"/><rect x="184.4" y="151.6" width="3.4" height="1.1" fill="#c2a9c4" opacity="0.38"/><rect x="222.3" y="107.1" width="3.5" height="1.5" fill="#70566c" opacity="0.40"/><rect x="0.9" y="136.7" width="5.9" height="2.3" fill="#cdb1c2" opacity="0.44"/><rect x="17.6" y="149.8" width="6.4" height="1.5" fill="#c3aac4" opacity="0.34"/><rect x="54.6" y="155.2" width="6.7" height="3.3" fill="#bfa7c5" opacity="0.38"/><rect x="181.9" y="135.9" width="5.7" height="2.0" fill="#564969" opacity="0.22"/><rect x="67.5" y="110.4" width="4.1" height="1.3" fill="#e2c1bf" opacity="0.25"/><rect x="71.5" y="103.7" width="3.6" height="1.5" fill="#73576d" opacity="0.29"/><rect x="123.6" y="138.8" width="4.4" height="1.2" fill="#534768" opacity="0.26"/><rect x="249.0" y="174.3" width="2.1" height="2.4" fill="#333764" opacity="0.49"/><rect x="71.5" y="133.6" width="3.0" height="2.5" fill="#d0b3c2" opacity="0.45"/><rect x="139.4" y="109.9" width="4.7" height="1.1" fill="#6e556c" opacity="0.35"/><rect x="187.1" y="167.3" width="3.7" height="3.4" fill="#b5a0c6" opacity="0.26"/><rect x="130.8" y="99.3" width="2.9" height="1.2" fill="#eac7be" opacity="0.37"/><rect x="223.5" y="123.3" width="2.0" height="2.0" fill="#614e6a" opacity="0.24"/><rect x="189.7" y="170.3" width="8.8" height="1.8" fill="#b39ec7" opacity="0.39"/><rect x="156.7" y="175.9" width="4.9" height="2.3" fill="#af9bc7" opacity="0.27"/><rect x="222.0" y="106.8" width="2.7" height="1.7" fill="#e4c3bf" opacity="0.34"/><rect x="50.5" y="138.3" width="3.9" height="2.7" fill="#544868" opacity="0.44"/><rect x="243.0" y="147.6" width="7.4" height="2.1" fill="#4b4367" opacity="0.21"/><rect x="119.9" y="155.4" width="6.8" height="2.5" fill="#bfa7c5" opacity="0.27"/><rect x="33.9" y="170.4" width="5.6" height="2.0" fill="#b39ec7" opacity="0.51"/><rect x="69.2" y="174.2" width="7.2" height="1.9" fill="#b09cc7" opacity="0.39"/><rect x="43.0" y="111.9" width="2.6" height="1.8" fill="#e0c0bf" opacity="0.33"/><rect x="265.1" y="168.8" width="5.3" height="1.4" fill="#b49fc7" opacity="0.28"/><rect x="24.2" y="125.3" width="3.0" height="1.4" fill="#d6b8c1" opacity="0.56"/><rect x="109.8" y="156.7" width="4.7" height="2.2" fill="#bea6c5" opacity="0.37"/><rect x="73.8" y="103.8" width="4.3" height="1.1" fill="#e7c5be" opacity="0.47"/><rect x="57.4" y="165.4" width="3.9" height="1.7" fill="#b7a1c6" opacity="0.41"/><rect x="225.7" y="172.5" width="8.7" height="1.1" fill="#b19dc7" opacity="0.50"/><rect x="125.9" y="168.0" width="6.3" height="1.0" fill="#b59fc6" opacity="0.57"/><rect x="227.6" y="162.6" width="8.8" height="1.6" fill="#b9a2c6" opacity="0.30"/><rect x="181.4" y="139.2" width="6.8" height="2.3" fill="#534768" opacity="0.43"/><rect x="146.7" y="134.2" width="2.2" height="2.3" fill="#cfb3c2" opacity="0.57"/><rect x="80.8" y="148.7" width="2.8" height="1.5" fill="#4a4367" opacity="0.41"/><rect x="18.7" y="107.6" width="3.4" height="1.5" fill="#e4c2bf" opacity="0.33"/><rect x="2.8" y="145.3" width="3.7" height="1.9" fill="#4d4467" opacity="0.39"/><rect x="126.4" y="167.1" width="3.7" height="1.7" fill="#3a3b65" opacity="0.41"/><rect x="5.8" y="122.7" width="3.9" height="1.9" fill="#d8bac1" opacity="0.34"/><rect x="246.1" y="150.4" width="3.4" height="1.1" fill="#c2a9c4" opacity="0.40"/><rect x="52.7" y="151.6" width="6.9" height="2.6" fill="#484267" opacity="0.26"/><rect x="82.9" y="173.7" width="8.4" height="1.7" fill="#b09cc7" opacity="0.52"/><rect x="253.2" y="121.7" width="3.9" height="1.2" fill="#d9bac0" opacity="0.40"/><rect x="252.4" y="150.2" width="2.9" height="1.9" fill="#c3aac4" opacity="0.59"/><rect x="13.8" y="109.9" width="2.2" height="1.3" fill="#6e556c" opacity="0.47"/><rect x="265.3" y="155.4" width="8.0" height="1.8" fill="#bfa7c5" opacity="0.58"/><rect x="8.5" y="156.5" width="6.3" height="1.9" fill="#bea6c5" opacity="0.37"/><rect x="0.8" y="112.0" width="2.8" height="1.3" fill="#6c546c" opacity="0.24"/><rect x="55.2" y="173.2" width="4.8" height="3.4" fill="#343864" opacity="0.33"/><rect x="125.9" y="102.8" width="2.9" height="1.6" fill="#e8c5be" opacity="0.38"/><rect x="8.1" y="168.1" width="5.0" height="3.2" fill="#393a65" opacity="0.21"/><rect x="16.6" y="101.7" width="4.0" height="1.2" fill="#75586d" opacity="0.47"/><rect x="72.4" y="125.1" width="5.9" height="1.8" fill="#604e6a" opacity="0.41"/><rect x="73.3" y="123.4" width="2.0" height="2.0" fill="#614e6a" opacity="0.39"/><rect x="6.5" y="171.6" width="3.8" height="2.4" fill="#353864" opacity="0.49"/><rect x="66.8" y="128.8" width="3.9" height="1.7" fill="#5c4c6a" opacity="0.25"/><rect x="196.4" y="160.8" width="7.6" height="2.9" fill="#3f3d65" opacity="0.30"/><rect x="96.3" y="123.6" width="5.1" height="1.1" fill="#d7b9c1" opacity="0.51"/><rect x="17.2" y="118.0" width="2.1" height="1.6" fill="#dcbcc0" opacity="0.59"/><rect x="262.8" y="167.0" width="3.9" height="1.2" fill="#b5a0c6" opacity="0.42"/><rect x="118.9" y="153.7" width="3.5" height="1.9" fill="#464166" opacity="0.40"/><rect x="225.3" y="156.6" width="6.3" height="1.3" fill="#433f66" opacity="0.29"/><rect x="99.2" y="142.7" width="6.0" height="1.4" fill="#c8aec3" opacity="0.34"/><rect x="235.2" y="110.8" width="3.7" height="1.3" fill="#e1c1bf" opacity="0.60"/><rect x="61.5" y="138.1" width="6.1" height="2.2" fill="#544868" opacity="0.23"/><rect x="217.9" y="135.6" width="6.1" height="2.5" fill="#ceb2c2" opacity="0.35"/><rect x="50.4" y="108.2" width="4.6" height="1.5" fill="#6f556c" opacity="0.31"/><rect x="119.5" y="165.7" width="3.9" height="3.1" fill="#3b3b65" opacity="0.23"/><rect x="164.9" y="144.9" width="3.2" height="1.7" fill="#c7adc3" opacity="0.32"/><rect x="159.4" y="118.6" width="4.3" height="1.2" fill="#dbbcc0" opacity="0.36"/><rect x="49.2" y="151.2" width="3.9" height="1.4" fill="#484267" opacity="0.36"/><rect x="27.0" y="103.9" width="2.9" height="1.4" fill="#73576d" opacity="0.23"/><rect x="185.0" y="111.6" width="3.2" height="1.3" fill="#e1c0bf" opacity="0.58"/><rect x="150.7" y="123.1" width="3.4" height="1.5" fill="#624f6a" opacity="0.50"/><rect x="52.5" y="127.0" width="5.0" height="1.3" fill="#d5b7c1" opacity="0.57"/><rect x="218.2" y="131.6" width="3.8" height="2.4" fill="#5a4b69" opacity="0.25"/><rect x="146.7" y="100.1" width="3.3" height="1.5" fill="#eac7be" opacity="0.47"/><rect x="134.2" y="127.6" width="2.6" height="1.4" fill="#d4b7c1" opacity="0.57"/><rect x="130.5" y="107.4" width="4.1" height="1.7" fill="#e4c3bf" opacity="0.29"/><rect x="259.5" y="171.6" width="5.7" height="1.2" fill="#353864" opacity="0.32"/><rect x="165.0" y="168.6" width="8.1" height="1.4" fill="#383a64" opacity="0.27"/><rect x="225.1" y="130.1" width="5.7" height="1.3" fill="#d2b5c2" opacity="0.39"/><rect x="102.0" y="138.9" width="2.6" height="1.4" fill="#534768" opacity="0.47"/><rect x="149.6" y="102.2" width="3.7" height="1.0" fill="#75586d" opacity="0.24"/><rect x="146.3" y="145.2" width="5.5" height="1.6" fill="#c7adc3" opacity="0.45"/><rect x="175.3" y="131.8" width="4.0" height="1.7" fill="#d1b4c2" opacity="0.47"/><rect x="62.6" y="136.7" width="5.8" height="2.3" fill="#554869" opacity="0.25"/><rect x="28.5" y="135.4" width="2.6" height="1.7" fill="#ceb2c2" opacity="0.40"/><rect x="10.8" y="138.3" width="5.2" height="1.1" fill="#544868" opacity="0.43"/><rect x="14.4" y="138.4" width="4.6" height="1.7" fill="#544868" opacity="0.24"/><rect x="265.0" y="165.0" width="7.2" height="3.2" fill="#b7a1c6" opacity="0.59"/><rect x="254.5" y="136.9" width="6.5" height="1.3" fill="#554869" opacity="0.48"/><rect x="93.3" y="104.0" width="3.8" height="1.1" fill="#73576d" opacity="0.28"/><rect x="38.2" y="161.8" width="5.5" height="3.3" fill="#baa3c6" opacity="0.34"/><rect x="84.9" y="138.0" width="2.2" height="1.3" fill="#ccb1c3" opacity="0.58"/><rect x="238.2" y="151.3" width="3.0" height="2.7" fill="#c2a9c4" opacity="0.44"/><rect x="95.7" y="148.0" width="7.1" height="2.2" fill="#4b4367" opacity="0.46"/><rect x="264.1" y="107.1" width="3.7" height="1.3" fill="#70566c" opacity="0.28"/><rect x="153.6" y="175.3" width="4.9" height="3.3" fill="#af9bc7" opacity="0.31"/><rect x="12.8" y="156.3" width="7.3" height="1.6" fill="#433f66" opacity="0.50"/><rect x="176.5" y="144.1" width="3.7" height="1.0" fill="#c7adc3" opacity="0.30"/><rect x="115.0" y="146.4" width="4.9" height="2.8" fill="#c6acc4" opacity="0.33"/><rect x="5.9" y="149.3" width="2.0" height="1.8" fill="#c3aac4" opacity="0.38"/><rect x="155.2" y="116.3" width="4.0" height="1.2" fill="#68526b" opacity="0.34"/><rect x="249.1" y="109.4" width="2.7" height="1.1" fill="#e2c1bf" opacity="0.47"/><rect x="208.1" y="166.1" width="4.9" height="1.7" fill="#b6a0c6" opacity="0.48"/><rect x="93.2" y="142.3" width="5.5" height="1.8" fill="#504668" opacity="0.42"/><rect x="240.3" y="118.1" width="2.2" height="1.6" fill="#dcbcc0" opacity="0.33"/><rect x="207.2" y="103.5" width="2.0" height="1.4" fill="#73576d" opacity="0.24"/><rect x="161.8" y="114.4" width="3.6" height="1.6" fill="#6a536c" opacity="0.25"/><rect x="79.9" y="122.8" width="2.2" height="2.1" fill="#624f6a" opacity="0.41"/><rect x="224.6" y="99.5" width="3.5" height="1.2" fill="#77596d" opacity="0.34"/><rect x="28.0" y="116.4" width="2.8" height="1.0" fill="#ddbdc0" opacity="0.51"/><rect x="224.9" y="152.5" width="6.4" height="1.6" fill="#c1a8c4" opacity="0.40"/><rect x="139.2" y="159.7" width="3.8" height="2.6" fill="#403e66" opacity="0.27"/><rect x="4.1" y="166.8" width="3.9" height="1.6" fill="#3a3b65" opacity="0.48"/><rect x="86.9" y="156.5" width="7.7" height="1.8" fill="#bea6c5" opacity="0.57"/><rect x="184.3" y="147.6" width="5.8" height="3.0" fill="#4b4367" opacity="0.45"/><rect x="228.1" y="152.7" width="4.7" height="2.6" fill="#c1a8c4" opacity="0.36"/><rect x="165.6" y="115.3" width="2.3" height="1.9" fill="#debec0" opacity="0.26"/><rect x="247.1" y="107.2" width="2.9" height="1.1" fill="#e4c3bf" opacity="0.26"/><rect x="168.6" y="152.3" width="6.3" height="2.6" fill="#c1a8c4" opacity="0.46"/><rect x="217.5" y="127.0" width="5.4" height="2.3" fill="#d5b7c1" opacity="0.55"/><rect x="251.2" y="169.4" width="2.8" height="1.6" fill="#b49ec7" opacity="0.26"/><rect x="216.0" y="164.3" width="6.5" height="3.2" fill="#3c3c65" opacity="0.29"/><rect x="26.0" y="106.7" width="4.0" height="1.2" fill="#e5c3be" opacity="0.40"/><rect x="68.3" y="100.6" width="2.6" height="1.4" fill="#e9c7be" opacity="0.36"/><rect x="134.0" y="173.2" width="8.6" height="2.8" fill="#b19cc7" opacity="0.39"/><rect x="205.6" y="132.6" width="3.6" height="2.1" fill="#594a69" opacity="0.26"/><rect x="24.2" y="165.4" width="7.9" height="1.5" fill="#b7a1c6" opacity="0.32"/><rect x="260.1" y="157.7" width="2.0" height="2.2" fill="#bda5c5" opacity="0.53"/><rect x="131.6" y="113.2" width="3.1" height="1.8" fill="#dfbfbf" opacity="0.58"/><rect x="57.1" y="120.8" width="4.6" height="1.6" fill="#d9bbc0" opacity="0.47"/><rect x="209.6" y="105.2" width="3.7" height="1.6" fill="#72576d" opacity="0.31"/><rect x="105.0" y="129.9" width="5.9" height="1.1" fill="#5b4b69" opacity="0.21"/><rect x="70.0" y="114.9" width="4.9" height="1.5" fill="#debec0" opacity="0.56"/><rect x="122.6" y="117.0" width="3.8" height="1.8" fill="#67516b" opacity="0.39"/><rect x="86.9" y="125.8" width="2.6" height="2.2" fill="#5f4d6a" opacity="0.42"/><rect x="116.7" y="112.1" width="4.3" height="1.5" fill="#e0c0bf" opacity="0.41"/><rect x="63.3" y="167.2" width="3.4" height="1.8" fill="#3a3b65" opacity="0.45"/><rect x="41.5" y="110.9" width="2.7" height="1.3" fill="#e1c1bf" opacity="0.31"/><rect x="50.3" y="124.3" width="5.9" height="2.0" fill="#d7b9c1" opacity="0.59"/><rect x="102.2" y="106.8" width="4.6" height="1.6" fill="#70566c" opacity="0.33"/><rect x="169.7" y="114.1" width="2.3" height="1.2" fill="#dfbfbf" opacity="0.26"/><rect x="210.4" y="129.7" width="5.0" height="1.7" fill="#5c4c6a" opacity="0.34"/><rect x="160.6" y="109.9" width="3.2" height="1.6" fill="#6e556c" opacity="0.33"/><rect x="199.3" y="143.2" width="4.3" height="1.4" fill="#4f4568" opacity="0.46"/><rect x="186.2" y="158.6" width="7.7" height="2.7" fill="#413e66" opacity="0.34"/><rect x="167.1" y="123.1" width="2.4" height="1.5" fill="#624f6a" opacity="0.41"/><rect x="66.5" y="147.5" width="4.4" height="1.9" fill="#4b4367" opacity="0.32"/><rect x="247.4" y="151.0" width="3.1" height="2.4" fill="#484267" opacity="0.32"/><rect x="259.2" y="136.7" width="2.2" height="1.9" fill="#cdb1c2" opacity="0.52"/><rect x="138.1" y="171.4" width="2.8" height="2.6" fill="#b29dc7" opacity="0.50"/></g>
<g filter="url(#p3b)">
<path d="M150 99h30l40 .5 46-1v4l-50 1-40-1z" fill="#f7c680" opacity=".55"/>
<path d="M0 108l20-1 14 2H8zM72 118l30-1 2 3H74z" fill="#f3c08a" opacity=".45"/>
<path d="M40 127h68l2 11H36zM148 127h68l4 11h-72z" fill="#4b4764" opacity=".5" filter="url(#p3b2)"/>
<path d="M47 124h58v7H47zM150 123h64v8h-64z" fill="#a79db0" opacity=".5"/>
<path d="M30 140c20-4 50-4 76 0l-10 22-60 6zM160 138c20-3 44-3 62 1l10 24-66 2z" fill="#45415c" opacity=".55" filter="url(#p3b2)"/>
<path d="M108 168h30l2 9h-36z" fill="#3f6650" opacity=".55"/>
<path d="M214 152l20-2 16 27h-28zM244 150l22-3v30h-10z" fill="#9fa6be" opacity=".45" filter="url(#p3b2)"/>
<path d="M0 160l30-6 6 23H0zM36 162l18-2-6 17H34z" fill="#8a90ac" opacity=".45" filter="url(#p3b2)"/>
<path d="M234 150l10-2 14 29h-10z" fill="#2f3a5c" opacity=".5" filter="url(#p3b2)"/>
</g>
<g filter="url(#p3b)">
<path d="M123.1 12.6 L123.3 25 L126.2 26.5 L126.2 32 L125.2 33 L125.9 60 L127.3 85 L129.2 106 L131.2 106 L131.2 110 L130.2 110 L133.2 122 L137.2 131 L139.2 131 L139.2 136 L138.2 136 L142.7 149 L148.2 160.5 L136.7 160.5 Q134.7 146 122.7 144.5 Q110.7 146 108.7 160.5 L97.2 160.5 L102.7 149 L107.2 136 L106.2 136 L106.2 131 L108.2 131 L112.2 122 L115.2 110 L114.2 110 L114.2 106 L116.2 106 L118.1 85 L119.5 60 L120.2 33 L119.2 32 L119.2 26.5 L122.1 25 L122.3 12.6Z" fill="url(#p3tw)"/>
<path d="M117.2 113h11l3 8 3.300 8h-23.600l3.300-8z" fill="#c090a0" opacity=".4"/>
</g></svg>
<svg style="left:14px;top:236px" width="120" height="22" viewBox="0 0 120 22">
<circle cx="4.100" cy="10.500" r="1.650" fill="#111"/><circle cx="9.900" cy="10.500" r="1.650" fill="#111"/><circle cx="15.700" cy="10.500" r="1.650" fill="#111"/>
<g fill="none" stroke="#1c1c1c" stroke-width="1.300" stroke-linejoin="round" stroke-linecap="round"><path d="M35.400 7.900l6.100-1.700 6.400 6.800-5.600 6-6.900-6.900z"/><path d="M38 4.400l6-.5 6.700 6.900-1.200 2"/><circle cx="38.800" cy="9.600" r=".500" fill="#1c1c1c"/></g>
<path d="M76 5.600c3.700 0 6.700 2.100 8.200 5.100-1.500 3-4.500 5.100-8.200 5.100s-6.700-2.100-8.200-5.100c1.500-3 4.500-5.100 8.200-5.100z" fill="#111"/><circle cx="76" cy="10.700" r="2.900" fill="#f1f1f1"/><circle cx="76" cy="10.700" r="1.250" fill="#111"/>
<g stroke="#111" stroke-width="1.700" fill="#111" stroke-linecap="butt"><path d="M103.400 16.700l3.600-3.600M110.400 9.700l4-4" fill="none" stroke-width="1.900"/><path d="M100.800 19.100v-6.200l6.200 6.200z" stroke="none"/><path d="M117.200 2.900v6.200L111 2.900z" stroke="none"/></g>
</svg>
<div class="plus" style="left:245.500px;top:232.500px"></div><svg style="left:252px;top:239px" width="16" height="16" viewBox="0 0 16 16" fill="none" stroke="#111" stroke-width="2"><path d="M8 0v16M0 8h16"/></svg>
</div>
<div class="pc" style="left:1406px;top:529px">
<svg style="left:9px;top:32px;overflow:hidden" width="265" height="169" viewBox="0 0 265 169"><defs>
<linearGradient id="p4sky" x1="0" y1="0" x2="0" y2="1"><stop offset="0" stop-color="#d8dde8"/><stop offset="1" stop-color="#e3e5ec"/></linearGradient>
<linearGradient id="p4min" x1="0" y1="0" x2="1" y2="0"><stop offset="0" stop-color="#f4f1ee"/><stop offset=".55" stop-color="#ebe6e2"/><stop offset="1" stop-color="#cbc4c0"/></linearGradient>
<radialGradient id="p4dome" cx="42%" cy="22%" r="95%"><stop offset="0" stop-color="#e1e4ea"/><stop offset=".5" stop-color="#c6cad4"/><stop offset="1" stop-color="#9da3b4"/></radialGradient>
<filter id="p4b" x="-10%" y="-10%" width="120%" height="120%"><feGaussianBlur stdDeviation=".45"/></filter>
</defs>
<rect width="265" height="169" fill="url(#p4sky)"/>
<g filter="url(#p4b)">
<path d="M30 169v-12l14-4 10-8 8-6 10-4 8-10 8-6 6-2 5-10V98l4-8 10-3 10 3 8 14 6-18h118l6 8 6 14 8 4v61z" fill="#dcd6d2"/>
<path d="M228 104h16v30h-16z" fill="#cfc6c1"/><path d="M230.0 104C230.0 96.9 232.7 94.6 236 94.6S242.0 96.9 242.0 104z" fill="#9099ae" />
<path d="M124 104l4-15 6-3h88l6 3 4 15z" fill="#d2c8c2"/>
<g fill="#7f7985" opacity="0.7"><path d="M138.2 101v-9.2a1.8 1.8 0 0 1 3.6 0v9.2z"/><path d="M150.9 101v-9.2a1.8 1.8 0 0 1 3.6 0v9.2z"/><path d="M163.5 101v-9.2a1.8 1.8 0 0 1 3.6 0v9.2z"/><path d="M176.2 101v-9.2a1.8 1.8 0 0 1 3.6 0v9.2z"/><path d="M188.9 101v-9.2a1.8 1.8 0 0 1 3.6 0v9.2z"/><path d="M201.5 101v-9.2a1.8 1.8 0 0 1 3.6 0v9.2z"/><path d="M214.2 101v-9.2a1.8 1.8 0 0 1 3.6 0v9.2z"/></g>
<path d="M132.5 87.5C132.5 58.5 153.0 48.9 178 48.9S223.5 58.5 223.5 87.5z" fill="url(#p4dome)" />
<path d="M135 87c2-17 12-30 28-36-8 9-13 21-14 36z" fill="#8e94a8" opacity=".5"/>
<path d="M178 49c-6 10-9 23-9 38M178 49c6 10 10 23 10 38M178 49c16 8 26 22 30 38M178 49c-16 8-24 22-28 38" fill="none" stroke="#aab0c0" stroke-width=".7" opacity=".8"/>
<path d="M132 87.500h92v2.500h-92z" fill="#b9b1ad"/>
<path d="M177.600 17.900h.8l.8 10 1.200 9 3 7 3 5h-16.800l3-5 3-7 1.200-9z" fill="#d9c58e"/><path d="M171 44h14l1.500 5h-17z" fill="#c9b071"/>
<path d="M99.500 98h23v26h-23z" fill="#cfc5bf"/><path d="M99.500 98h8v26h-8z" fill="#bdb3ad" opacity=".7"/><path d="M99.0 98.5C99.0 89.1 104.4 86 111 86S123.0 89.1 123.0 98.5z" fill="#8d96ad" /><path d="M98 98h26v2.200H98z" fill="#b8afaa"/><g fill="#7f7985" opacity="0.7"><path d="M104.8 109v-4.8a1.2 1.2 0 0 1 2.4 0v4.8z"/><path d="M116.8 109v-4.8a1.2 1.2 0 0 1 2.4 0v4.8z"/></g>
<path d="M110.700 80.500h.7v6h-.7z" fill="#b9a87a"/>
<path d="M194 95h24.600v32H194z" fill="#dbd2cc"/><path d="M211 95h7.600v32H211z" fill="#c5bbb5" opacity=".8"/><path d="M193.8 95.5C193.8 86.6 199.4 83.6 206.3 83.6S218.8 86.6 218.8 95.5z" fill="#cdd0d9" /><path d="M193 95h26.600v2.200H193z" fill="#b8afaa"/>
<path d="M123 104l-5 4v4l-5 3v4l-6 3v6l20 2 12-26z" fill="#cbc1bb"/>
<path d="M230 104l6 6v6l5 4v14h-22v-30z" fill="#cdc3bd"/>
<path d="M117 132h76v23h-76z" fill="#d6cdc7"/>
<path d="M119.7 132.5C119.7 115.6 135.4 110 154.7 110S189.7 115.6 189.7 132.5z" fill="url(#p4dome)" />
<path d="M116 132h78v2.400h-78z" fill="#b8afaa"/>
<g fill="#7f7985" opacity="0.7"><path d="M123.9 151v-11.9a2.1 2.1 0 0 1 4.2 0v11.9z"/><path d="M135.5 151v-11.9a2.1 2.1 0 0 1 4.2 0v11.9z"/><path d="M147.1 151v-11.9a2.1 2.1 0 0 1 4.2 0v11.9z"/><path d="M158.7 151v-11.9a2.1 2.1 0 0 1 4.2 0v11.9z"/><path d="M170.3 151v-11.9a2.1 2.1 0 0 1 4.2 0v11.9z"/><path d="M181.9 151v-11.9a2.1 2.1 0 0 1 4.2 0v11.9z"/></g>
<path d="M202 153h44v16h-44z" fill="#dcd4cf"/><path d="M204.5 153.5C204.5 140.8 213.3 136.6 224 136.6S243.5 140.8 243.5 153.5z" fill="#cfd2db" /><path d="M201 153h46v2h-46z" fill="#b8afaa"/><g fill="#7f7985" opacity="0.7"><path d="M210.4 167v-7.4a1.6 1.6 0 0 1 3.2 0v7.4z"/><path d="M223.4 167v-7.4a1.6 1.6 0 0 1 3.2 0v7.4z"/><path d="M236.4 167v-7.4a1.6 1.6 0 0 1 3.2 0v7.4z"/></g>
<path d="M78.8 128h11.4v12h-11.4z" fill="#d3cac4"/><path d="M78.0 128.3C78.0 122.8 80.9 121 84.5 121S91.0 122.8 91.0 128.3z" fill="#d5d7de" />
<path d="M97.3 126h10.4v14h-10.4z" fill="#d3cac4"/><path d="M96.5 126.3C96.5 120.8 99.2 119 102.5 119S108.5 120.8 108.5 126.3z" fill="#d9dbe1" />
<path d="M56.3 141h10.4v12h-10.4z" fill="#d3cac4"/><path d="M55.5 141.3C55.5 136.6 58.2 135 61.5 135S67.5 136.6 67.5 141.3z" fill="#d5d7de" />
<path d="M191.3 126h9.4v14h-9.4z" fill="#d3cac4"/><path d="M190.5 126.3C190.5 121.6 193.0 120 196 120S201.5 121.6 201.5 126.3z" fill="#d5d7de" />
<path d="M209.8 134h8.4v10h-8.4z" fill="#d3cac4"/><path d="M209.0 134.3C209.0 129.6 211.2 128 214 128S219.0 129.6 219.0 134.3z" fill="#d5d7de" />
<path d="M180.8 148h10.4v12h-10.4z" fill="#d3cac4"/><path d="M180.0 148.3C180.0 143.6 182.7 142 186 142S192.0 143.6 192.0 148.3z" fill="#d5d7de" />
<path d="M115.8 156h8.4v10h-8.4z" fill="#d3cac4"/><path d="M115.0 156.3C115.0 151.6 117.2 150 120 150S125.0 151.6 125.0 156.3z" fill="#d8dae0" />
<path d="M68.8 153h8.4v10h-8.4z" fill="#d3cac4"/><path d="M68.0 153.3C68.0 148.6 70.2 147 73 147S78.0 148.6 78.0 153.3z" fill="#d8dae0" />
<path d="M58 158l12-18 14-2 4 6-12 16z" fill="#b7becd"/>
<path d="M68.0 158C68.0 144.5 72.0 140 77 140S86.0 144.5 86.0 158z" fill="#c9cdd7" />
<path d="M84 150h40v19H84zM34 158h30v11H34z" fill="#ddd5d0"/>
<path d="M22.5 170C22.5 159.1 30.6 155.5 40.5 155.5S58.5 159.1 58.5 170z" fill="#d0d3dc" /><path d="M89.5 170C89.5 158.8 95.3 155 102.5 155S115.5 158.8 115.5 170z" fill="#d3d6de" /><path d="M159.5 165C159.5 155.2 164.2 152 170 152S180.5 155.2 180.5 165z" fill="#d6d9e0" /><path d="M59.0 170C59.0 162.5 62.6 160 67 160S75.0 162.5 75.0 170z" fill="#d8dbe1" /><path d="M131.0 171C131.0 164.2 135.1 162 140 162S149.0 164.2 149.0 171z" fill="#d6d9e0" />
<path d="M128 156h72v13h-72z" fill="#dbd3ce" opacity=".9"/><path d="M159.5 164C159.5 155.0 164.2 152 170 152S180.5 155.0 180.5 164z" fill="#d6d9e0" />
<g fill="#7f7985" opacity="0.7"><path d="M132.4 169v-7.4a1.6 1.6 0 0 1 3.2 0v7.4z"/><path d="M147.9 169v-7.4a1.6 1.6 0 0 1 3.2 0v7.4z"/><path d="M163.4 169v-7.4a1.6 1.6 0 0 1 3.2 0v7.4z"/><path d="M178.9 169v-7.4a1.6 1.6 0 0 1 3.2 0v7.4z"/><path d="M194.4 169v-7.4a1.6 1.6 0 0 1 3.2 0v7.4z"/></g>
<path d="M30 150h26v1.500H30zM30 157h30v1.200H30z" fill="#a8a09c" opacity=".6"/>
<rect x="6.800" y="0" width="17.300" height="169" fill="url(#p4min)"/>
<path d="M5.9 7.9h19.2l3.9 3.3v3.5l-4.4 5.0h-18.2l-4.4 -5.0v-3.5z" fill="#e6e0dc"/><path d="M2.0 11.4h27.0v3.1h-27.0z" fill="#b9b0ab" opacity=".75"/><path d="M3.5 15.2h24.0l-2.500 2.4h-19.0z" fill="#a9a09b" opacity=".6"/><path d="M5.9 44.4h19.2l3.9 3.6v3.8l-4.4 5.4h-18.2l-4.4 -5.4v-3.8z" fill="#e6e0dc"/><path d="M2.0 48.2h27.0v3.3h-27.0z" fill="#b9b0ab" opacity=".75"/><path d="M3.5 52.3h24.0l-2.500 2.6h-19.0z" fill="#a9a09b" opacity=".6"/><path d="M5.9 80.9h19.2l4.2 3.6v3.8l-4.7 5.4h-18.2l-4.7 -5.4v-3.8z" fill="#e6e0dc"/><path d="M1.7 84.7h27.6v3.3h-27.6z" fill="#b9b0ab" opacity=".75"/><path d="M3.2 88.8h24.6l-2.500 2.6h-19.6z" fill="#a9a09b" opacity=".6"/>
<path d="M0 150h7v19H0z" fill="#d7d0cb"/>
<rect x="241.400" y="0" width="18.300" height="169" fill="url(#p4min)"/><path d="M240 0h21v3.500h-21z" fill="#cfc7c2"/>
<path d="M240.4 27.9h20.2l3.9 4.1v4.4l-4.4 6.1h-19.2l-4.4 -6.1v-4.4z" fill="#e6e0dc"/><path d="M236.5 32.3h28.0v3.8h-28.0z" fill="#b9b0ab" opacity=".75"/><path d="M238.0 37.0h25.0l-2.500 2.9h-20.0z" fill="#a9a09b" opacity=".6"/><path d="M240.4 67.2h20.2l4.2 3.8v4.1l-4.7 5.8h-19.2l-4.7 -5.8v-4.1z" fill="#e6e0dc"/><path d="M236.2 71.3h28.6v3.6h-28.6z" fill="#b9b0ab" opacity=".75"/><path d="M237.7 75.7h25.6l-2.500 2.7h-20.6z" fill="#a9a09b" opacity=".6"/>
<path d="M260 126h5v43h-5z" fill="#d8d1cc"/>
<path d="M82 70.800l5-1.400 3 .3 5-1.500-4 2.300-3 .5-1.500 1.200-1-.9z" fill="#aeb2bd"/>
</g></svg>
<svg style="left:14px;top:236px" width="120" height="22" viewBox="0 0 120 22">
<circle cx="4.100" cy="10.500" r="1.650" fill="#111"/><circle cx="9.900" cy="10.500" r="1.650" fill="#111"/><circle cx="15.700" cy="10.500" r="1.650" fill="#111"/>
<g fill="none" stroke="#1c1c1c" stroke-width="1.300" stroke-linejoin="round" stroke-linecap="round"><path d="M35.400 7.900l6.100-1.700 6.400 6.800-5.600 6-6.900-6.900z"/><path d="M38 4.400l6-.5 6.700 6.900-1.200 2"/><circle cx="38.800" cy="9.600" r=".500" fill="#1c1c1c"/></g>
<path d="M76 5.600c3.700 0 6.700 2.100 8.200 5.100-1.500 3-4.500 5.100-8.200 5.100s-6.700-2.100-8.200-5.100c1.500-3 4.500-5.100 8.200-5.100z" fill="#111"/><circle cx="76" cy="10.700" r="2.900" fill="#f1f1f1"/><circle cx="76" cy="10.700" r="1.250" fill="#111"/>
<g stroke="#111" stroke-width="1.700" fill="#111" stroke-linecap="butt"><path d="M103.400 16.700l3.600-3.600M110.400 9.700l4-4" fill="none" stroke-width="1.900"/><path d="M100.800 19.100v-6.200l6.200 6.200z" stroke="none"/><path d="M117.200 2.900v6.200L111 2.900z" stroke="none"/></g>
</svg>
<div class="plus" style="left:245.500px;top:232.500px"></div><svg style="left:252px;top:239px" width="16" height="16" viewBox="0 0 16 16" fill="none" stroke="#111" stroke-width="2"><path d="M8 0v16M0 8h16"/></svg>
</div>
</div></body></html>
